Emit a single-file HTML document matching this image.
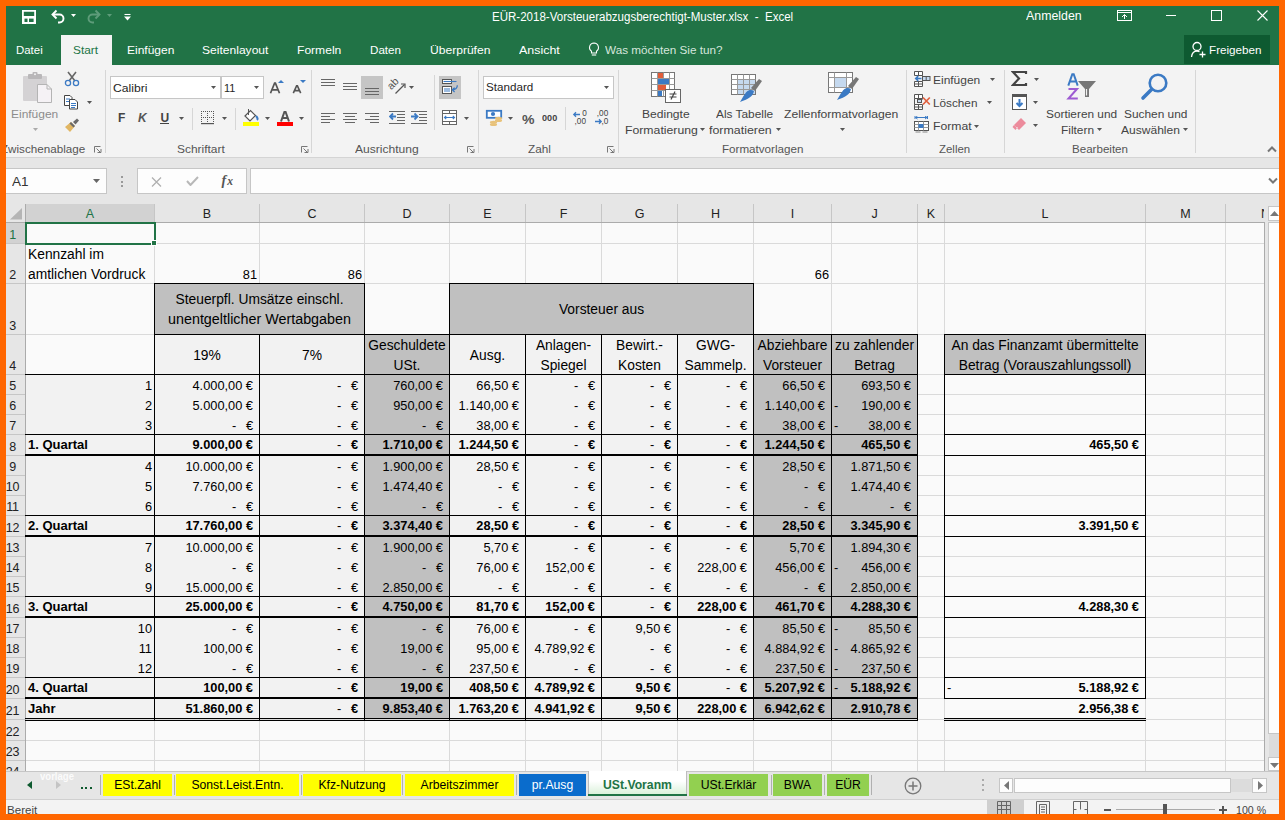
<!DOCTYPE html>
<html><head><meta charset="utf-8"><style>
*{margin:0;padding:0;box-sizing:border-box}
html,body{width:1285px;height:820px;overflow:hidden;background:#ff6600;font-family:"Liberation Sans", sans-serif}
.t{position:absolute;white-space:nowrap;line-height:1}
</style></head><body>

<div style="position:absolute;left:6px;top:6px;width:1273px;height:808px;background:#217346;"></div>
<div style="position:absolute;left:6px;top:65px;width:1273px;height:93px;background:#f3f3f3;border-bottom:1px solid #d4d4d4;"></div>
<div style="position:absolute;left:6px;top:158px;width:1273px;height:46px;background:#e6e6e6;"></div>
<div style="position:absolute;left:6px;top:204px;width:1259px;height:567px;background:#fafafa;"></div>
<div style="position:absolute;left:6px;top:204px;width:1259px;height:19px;background:#e6e6e6;"></div>
<div style="position:absolute;left:6px;top:204px;width:19px;height:567px;background:#e6e6e6;"></div>
<div style="position:absolute;left:26px;top:204px;width:128px;height:18px;background:#d2d2d2;"></div>
<div style="position:absolute;left:6px;top:223px;width:19px;height:20px;background:#d2d2d2;"></div>
<div style="position:absolute;left:6px;top:222px;width:1259px;height:1px;background:#ababab;"></div>
<div style="position:absolute;left:25px;top:204px;width:1px;height:567px;background:#ababab;"></div>
<div style="position:absolute;left:154px;top:223px;width:1px;height:548px;background:#dadada;"></div>
<div style="position:absolute;left:154px;top:204px;width:1px;height:18px;background:#c6c6c6;"></div>
<div style="position:absolute;left:259px;top:223px;width:1px;height:548px;background:#dadada;"></div>
<div style="position:absolute;left:259px;top:204px;width:1px;height:18px;background:#c6c6c6;"></div>
<div style="position:absolute;left:364px;top:223px;width:1px;height:548px;background:#dadada;"></div>
<div style="position:absolute;left:364px;top:204px;width:1px;height:18px;background:#c6c6c6;"></div>
<div style="position:absolute;left:449px;top:223px;width:1px;height:548px;background:#dadada;"></div>
<div style="position:absolute;left:449px;top:204px;width:1px;height:18px;background:#c6c6c6;"></div>
<div style="position:absolute;left:525px;top:223px;width:1px;height:548px;background:#dadada;"></div>
<div style="position:absolute;left:525px;top:204px;width:1px;height:18px;background:#c6c6c6;"></div>
<div style="position:absolute;left:601px;top:223px;width:1px;height:548px;background:#dadada;"></div>
<div style="position:absolute;left:601px;top:204px;width:1px;height:18px;background:#c6c6c6;"></div>
<div style="position:absolute;left:677px;top:223px;width:1px;height:548px;background:#dadada;"></div>
<div style="position:absolute;left:677px;top:204px;width:1px;height:18px;background:#c6c6c6;"></div>
<div style="position:absolute;left:753px;top:223px;width:1px;height:548px;background:#dadada;"></div>
<div style="position:absolute;left:753px;top:204px;width:1px;height:18px;background:#c6c6c6;"></div>
<div style="position:absolute;left:831px;top:223px;width:1px;height:548px;background:#dadada;"></div>
<div style="position:absolute;left:831px;top:204px;width:1px;height:18px;background:#c6c6c6;"></div>
<div style="position:absolute;left:917px;top:223px;width:1px;height:548px;background:#dadada;"></div>
<div style="position:absolute;left:917px;top:204px;width:1px;height:18px;background:#c6c6c6;"></div>
<div style="position:absolute;left:944px;top:223px;width:1px;height:548px;background:#dadada;"></div>
<div style="position:absolute;left:944px;top:204px;width:1px;height:18px;background:#c6c6c6;"></div>
<div style="position:absolute;left:1145px;top:223px;width:1px;height:548px;background:#dadada;"></div>
<div style="position:absolute;left:1145px;top:204px;width:1px;height:18px;background:#c6c6c6;"></div>
<div style="position:absolute;left:1225px;top:223px;width:1px;height:548px;background:#dadada;"></div>
<div style="position:absolute;left:1225px;top:204px;width:1px;height:18px;background:#c6c6c6;"></div>
<div style="position:absolute;left:26px;top:243px;width:1239px;height:1px;background:#dadada;"></div>
<div style="position:absolute;left:6px;top:243px;width:19px;height:1px;background:#c6c6c6;"></div>
<div style="position:absolute;left:26px;top:283px;width:1239px;height:1px;background:#dadada;"></div>
<div style="position:absolute;left:6px;top:283px;width:19px;height:1px;background:#c6c6c6;"></div>
<div style="position:absolute;left:26px;top:334px;width:1239px;height:1px;background:#dadada;"></div>
<div style="position:absolute;left:6px;top:334px;width:19px;height:1px;background:#c6c6c6;"></div>
<div style="position:absolute;left:26px;top:374px;width:1239px;height:1px;background:#dadada;"></div>
<div style="position:absolute;left:6px;top:374px;width:19px;height:1px;background:#c6c6c6;"></div>
<div style="position:absolute;left:26px;top:394px;width:1239px;height:1px;background:#dadada;"></div>
<div style="position:absolute;left:6px;top:394px;width:19px;height:1px;background:#c6c6c6;"></div>
<div style="position:absolute;left:26px;top:414px;width:1239px;height:1px;background:#dadada;"></div>
<div style="position:absolute;left:6px;top:414px;width:19px;height:1px;background:#c6c6c6;"></div>
<div style="position:absolute;left:26px;top:434px;width:1239px;height:1px;background:#dadada;"></div>
<div style="position:absolute;left:6px;top:434px;width:19px;height:1px;background:#c6c6c6;"></div>
<div style="position:absolute;left:26px;top:455px;width:1239px;height:1px;background:#dadada;"></div>
<div style="position:absolute;left:6px;top:455px;width:19px;height:1px;background:#c6c6c6;"></div>
<div style="position:absolute;left:26px;top:475px;width:1239px;height:1px;background:#dadada;"></div>
<div style="position:absolute;left:6px;top:475px;width:19px;height:1px;background:#c6c6c6;"></div>
<div style="position:absolute;left:26px;top:495px;width:1239px;height:1px;background:#dadada;"></div>
<div style="position:absolute;left:6px;top:495px;width:19px;height:1px;background:#c6c6c6;"></div>
<div style="position:absolute;left:26px;top:515px;width:1239px;height:1px;background:#dadada;"></div>
<div style="position:absolute;left:6px;top:515px;width:19px;height:1px;background:#c6c6c6;"></div>
<div style="position:absolute;left:26px;top:536px;width:1239px;height:1px;background:#dadada;"></div>
<div style="position:absolute;left:6px;top:536px;width:19px;height:1px;background:#c6c6c6;"></div>
<div style="position:absolute;left:26px;top:556px;width:1239px;height:1px;background:#dadada;"></div>
<div style="position:absolute;left:6px;top:556px;width:19px;height:1px;background:#c6c6c6;"></div>
<div style="position:absolute;left:26px;top:576px;width:1239px;height:1px;background:#dadada;"></div>
<div style="position:absolute;left:6px;top:576px;width:19px;height:1px;background:#c6c6c6;"></div>
<div style="position:absolute;left:26px;top:596px;width:1239px;height:1px;background:#dadada;"></div>
<div style="position:absolute;left:6px;top:596px;width:19px;height:1px;background:#c6c6c6;"></div>
<div style="position:absolute;left:26px;top:617px;width:1239px;height:1px;background:#dadada;"></div>
<div style="position:absolute;left:6px;top:617px;width:19px;height:1px;background:#c6c6c6;"></div>
<div style="position:absolute;left:26px;top:637px;width:1239px;height:1px;background:#dadada;"></div>
<div style="position:absolute;left:6px;top:637px;width:19px;height:1px;background:#c6c6c6;"></div>
<div style="position:absolute;left:26px;top:657px;width:1239px;height:1px;background:#dadada;"></div>
<div style="position:absolute;left:6px;top:657px;width:19px;height:1px;background:#c6c6c6;"></div>
<div style="position:absolute;left:26px;top:677px;width:1239px;height:1px;background:#dadada;"></div>
<div style="position:absolute;left:6px;top:677px;width:19px;height:1px;background:#c6c6c6;"></div>
<div style="position:absolute;left:26px;top:698px;width:1239px;height:1px;background:#dadada;"></div>
<div style="position:absolute;left:6px;top:698px;width:19px;height:1px;background:#c6c6c6;"></div>
<div style="position:absolute;left:26px;top:719px;width:1239px;height:1px;background:#dadada;"></div>
<div style="position:absolute;left:6px;top:719px;width:19px;height:1px;background:#c6c6c6;"></div>
<div style="position:absolute;left:26px;top:740px;width:1239px;height:1px;background:#dadada;"></div>
<div style="position:absolute;left:6px;top:740px;width:19px;height:1px;background:#c6c6c6;"></div>
<div style="position:absolute;left:26px;top:760px;width:1239px;height:1px;background:#dadada;"></div>
<div style="position:absolute;left:6px;top:760px;width:19px;height:1px;background:#c6c6c6;"></div>
<div class="t" style="left:26px;top:208px;font-size:12.5px;color:#217346;width:128px;text-align:center;">A</div>
<div class="t" style="left:155px;top:208px;font-size:12.5px;color:#222;width:104px;text-align:center;">B</div>
<div class="t" style="left:260px;top:208px;font-size:12.5px;color:#222;width:104px;text-align:center;">C</div>
<div class="t" style="left:365px;top:208px;font-size:12.5px;color:#222;width:84px;text-align:center;">D</div>
<div class="t" style="left:450px;top:208px;font-size:12.5px;color:#222;width:75px;text-align:center;">E</div>
<div class="t" style="left:526px;top:208px;font-size:12.5px;color:#222;width:75px;text-align:center;">F</div>
<div class="t" style="left:602px;top:208px;font-size:12.5px;color:#222;width:75px;text-align:center;">G</div>
<div class="t" style="left:678px;top:208px;font-size:12.5px;color:#222;width:75px;text-align:center;">H</div>
<div class="t" style="left:754px;top:208px;font-size:12.5px;color:#222;width:77px;text-align:center;">I</div>
<div class="t" style="left:832px;top:208px;font-size:12.5px;color:#222;width:85px;text-align:center;">J</div>
<div class="t" style="left:918px;top:208px;font-size:12.5px;color:#222;width:26px;text-align:center;">K</div>
<div class="t" style="left:945px;top:208px;font-size:12.5px;color:#222;width:200px;text-align:center;">L</div>
<div class="t" style="left:1146px;top:208px;font-size:12.5px;color:#222;width:79px;text-align:center;">M</div>
<div style="position:absolute;left:1226px;top:204px;width:38px;height:18px;overflow:hidden">
<div class="t" style="left:35px;top:4px;font-size:12.5px;color:#222;">N</div>
</div>
<div class="t" style="left:3px;top:229px;font-size:12.5px;color:#217346;width:19px;text-align:center;letter-spacing:-0.3px;">1</div>
<div class="t" style="left:3px;top:269px;font-size:12.5px;color:#222;width:19px;text-align:center;letter-spacing:-0.3px;">2</div>
<div class="t" style="left:3px;top:320px;font-size:12.5px;color:#222;width:19px;text-align:center;letter-spacing:-0.3px;">3</div>
<div class="t" style="left:3px;top:360px;font-size:12.5px;color:#222;width:19px;text-align:center;letter-spacing:-0.3px;">4</div>
<div class="t" style="left:3px;top:380px;font-size:12.5px;color:#222;width:19px;text-align:center;letter-spacing:-0.3px;">5</div>
<div class="t" style="left:3px;top:400px;font-size:12.5px;color:#222;width:19px;text-align:center;letter-spacing:-0.3px;">6</div>
<div class="t" style="left:3px;top:420px;font-size:12.5px;color:#222;width:19px;text-align:center;letter-spacing:-0.3px;">7</div>
<div class="t" style="left:3px;top:441px;font-size:12.5px;color:#222;width:19px;text-align:center;letter-spacing:-0.3px;">8</div>
<div class="t" style="left:3px;top:461px;font-size:12.5px;color:#222;width:19px;text-align:center;letter-spacing:-0.3px;">9</div>
<div class="t" style="left:3px;top:481px;font-size:12.5px;color:#222;width:19px;text-align:center;letter-spacing:-0.3px;">10</div>
<div class="t" style="left:3px;top:501px;font-size:12.5px;color:#222;width:19px;text-align:center;letter-spacing:-0.3px;">11</div>
<div class="t" style="left:3px;top:522px;font-size:12.5px;color:#222;width:19px;text-align:center;letter-spacing:-0.3px;">12</div>
<div class="t" style="left:3px;top:542px;font-size:12.5px;color:#222;width:19px;text-align:center;letter-spacing:-0.3px;">13</div>
<div class="t" style="left:3px;top:562px;font-size:12.5px;color:#222;width:19px;text-align:center;letter-spacing:-0.3px;">14</div>
<div class="t" style="left:3px;top:582px;font-size:12.5px;color:#222;width:19px;text-align:center;letter-spacing:-0.3px;">15</div>
<div class="t" style="left:3px;top:603px;font-size:12.5px;color:#222;width:19px;text-align:center;letter-spacing:-0.3px;">16</div>
<div class="t" style="left:3px;top:623px;font-size:12.5px;color:#222;width:19px;text-align:center;letter-spacing:-0.3px;">17</div>
<div class="t" style="left:3px;top:643px;font-size:12.5px;color:#222;width:19px;text-align:center;letter-spacing:-0.3px;">18</div>
<div class="t" style="left:3px;top:663px;font-size:12.5px;color:#222;width:19px;text-align:center;letter-spacing:-0.3px;">19</div>
<div class="t" style="left:3px;top:684px;font-size:12.5px;color:#222;width:19px;text-align:center;letter-spacing:-0.3px;">20</div>
<div class="t" style="left:3px;top:705px;font-size:12.5px;color:#222;width:19px;text-align:center;letter-spacing:-0.3px;">21</div>
<div class="t" style="left:3px;top:726px;font-size:12.5px;color:#222;width:19px;text-align:center;letter-spacing:-0.3px;">22</div>
<div class="t" style="left:3px;top:746px;font-size:12.5px;color:#222;width:19px;text-align:center;letter-spacing:-0.3px;">23</div>
<div class="t" style="left:3px;top:766px;font-size:12.5px;color:#222;width:19px;text-align:center;letter-spacing:-0.3px;">24</div>
<div style="position:absolute;left:155px;top:284px;width:209px;height:50px;background:#c0c0c0;"></div>
<div style="position:absolute;left:450px;top:284px;width:303px;height:50px;background:#c0c0c0;"></div>
<div style="position:absolute;left:155px;top:335px;width:209px;height:39px;background:#f2f2f2;"></div>
<div style="position:absolute;left:450px;top:335px;width:303px;height:39px;background:#f2f2f2;"></div>
<div style="position:absolute;left:365px;top:335px;width:84px;height:384px;background:#c0c0c0;"></div>
<div style="position:absolute;left:754px;top:335px;width:163px;height:384px;background:#c0c0c0;"></div>
<div style="position:absolute;left:945px;top:335px;width:200px;height:39px;background:#c0c0c0;"></div>
<div style="position:absolute;left:26px;top:375px;width:338px;height:344px;background:#f2f2f2;"></div>
<div style="position:absolute;left:450px;top:375px;width:303px;height:344px;background:#f2f2f2;"></div>
<div style="position:absolute;left:154px;top:283px;width:1px;height:438px;background:#000;"></div>
<div style="position:absolute;left:364px;top:283px;width:1px;height:438px;background:#000;"></div>
<div style="position:absolute;left:449px;top:283px;width:1px;height:438px;background:#000;"></div>
<div style="position:absolute;left:753px;top:283px;width:1px;height:438px;background:#000;"></div>
<div style="position:absolute;left:259px;top:334px;width:1px;height:387px;background:#000;"></div>
<div style="position:absolute;left:525px;top:334px;width:1px;height:387px;background:#000;"></div>
<div style="position:absolute;left:601px;top:334px;width:1px;height:387px;background:#000;"></div>
<div style="position:absolute;left:677px;top:334px;width:1px;height:387px;background:#000;"></div>
<div style="position:absolute;left:831px;top:334px;width:1px;height:387px;background:#000;"></div>
<div style="position:absolute;left:917px;top:334px;width:1px;height:387px;background:#000;"></div>
<div style="position:absolute;left:944px;top:334px;width:1px;height:365px;background:#000;"></div>
<div style="position:absolute;left:1145px;top:334px;width:1px;height:365px;background:#000;"></div>
<div style="position:absolute;left:154px;top:283px;width:211px;height:1px;background:#000;"></div>
<div style="position:absolute;left:449px;top:283px;width:305px;height:1px;background:#000;"></div>
<div style="position:absolute;left:154px;top:334px;width:764px;height:1px;background:#000;"></div>
<div style="position:absolute;left:944px;top:334px;width:202px;height:1px;background:#000;"></div>
<div style="position:absolute;left:25px;top:374px;width:893px;height:1px;background:#000;"></div>
<div style="position:absolute;left:944px;top:374px;width:202px;height:1px;background:#000;"></div>
<div style="position:absolute;left:25px;top:434px;width:893px;height:1px;background:#000;"></div>
<div style="position:absolute;left:944px;top:434px;width:202px;height:1px;background:#000;"></div>
<div style="position:absolute;left:25px;top:515px;width:893px;height:1px;background:#000;"></div>
<div style="position:absolute;left:944px;top:515px;width:202px;height:1px;background:#000;"></div>
<div style="position:absolute;left:25px;top:596px;width:893px;height:1px;background:#000;"></div>
<div style="position:absolute;left:944px;top:596px;width:202px;height:1px;background:#000;"></div>
<div style="position:absolute;left:25px;top:677px;width:893px;height:1px;background:#000;"></div>
<div style="position:absolute;left:944px;top:677px;width:202px;height:1px;background:#000;"></div>
<div style="position:absolute;left:25px;top:454px;width:893px;height:2px;background:#000;"></div>
<div style="position:absolute;left:944px;top:455px;width:202px;height:1px;background:#000;"></div>
<div style="position:absolute;left:25px;top:535px;width:893px;height:2px;background:#000;"></div>
<div style="position:absolute;left:944px;top:536px;width:202px;height:1px;background:#000;"></div>
<div style="position:absolute;left:25px;top:616px;width:893px;height:2px;background:#000;"></div>
<div style="position:absolute;left:944px;top:617px;width:202px;height:1px;background:#000;"></div>
<div style="position:absolute;left:25px;top:697px;width:893px;height:2px;background:#000;"></div>
<div style="position:absolute;left:944px;top:698px;width:202px;height:1px;background:#000;"></div>
<div style="position:absolute;left:25px;top:718px;width:893px;height:1px;background:#000;"></div>
<div style="position:absolute;left:25px;top:720px;width:893px;height:1px;background:#000;"></div>
<div style="position:absolute;left:944px;top:718px;width:202px;height:1px;background:#000;"></div>
<div style="position:absolute;left:944px;top:720px;width:202px;height:1px;background:#000;"></div>
<div class="t" style="left:28px;top:248px;font-size:13.8px;color:#000;">Kennzahl im</div>
<div class="t" style="left:28px;top:268px;font-size:13.8px;color:#000;">amtlichen Vordruck</div>
<div class="t" style="left:155px;top:269px;font-size:12.8px;color:#000;width:102px;text-align:right;">81</div>
<div class="t" style="left:260px;top:269px;font-size:12.8px;color:#000;width:102px;text-align:right;">86</div>
<div class="t" style="left:754px;top:269px;font-size:12.8px;color:#000;width:75px;text-align:right;">66</div>
<div class="t" style="left:155px;top:293px;font-size:13.8px;color:#000;width:209px;text-align:center;">Steuerpfl. Umsätze einschl.</div>
<div class="t" style="left:168.2px;top:313px;font-size:13.8px;color:#000;transform:scaleX(1.0386);transform-origin:0 0;">unentgeltlicher Wertabgaben</div>
<div class="t" style="left:450px;top:303px;font-size:13.8px;color:#000;width:303px;text-align:center;">Vorsteuer aus</div>
<div class="t" style="left:155px;top:349px;font-size:13.8px;color:#000;width:104px;text-align:center;">19%</div>
<div class="t" style="left:260px;top:349px;font-size:13.8px;color:#000;width:104px;text-align:center;">7%</div>
<div class="t" style="left:365px;top:339px;font-size:13.8px;color:#000;width:84px;text-align:center;">Geschuldete</div>
<div class="t" style="left:365px;top:359px;font-size:13.8px;color:#000;width:84px;text-align:center;">USt.</div>
<div class="t" style="left:450px;top:349px;font-size:13.8px;color:#000;width:75px;text-align:center;">Ausg.</div>
<div class="t" style="left:526px;top:339px;font-size:13.8px;color:#000;width:75px;text-align:center;">Anlagen-</div>
<div class="t" style="left:526px;top:359px;font-size:13.8px;color:#000;width:75px;text-align:center;">Spiegel</div>
<div class="t" style="left:602px;top:339px;font-size:13.8px;color:#000;width:75px;text-align:center;">Bewirt.-</div>
<div class="t" style="left:602px;top:359px;font-size:13.8px;color:#000;width:75px;text-align:center;">Kosten</div>
<div class="t" style="left:678px;top:339px;font-size:13.8px;color:#000;width:75px;text-align:center;">GWG-</div>
<div class="t" style="left:678px;top:359px;font-size:13.8px;color:#000;width:75px;text-align:center;">Sammelp.</div>
<div class="t" style="left:754px;top:339px;font-size:13.8px;color:#000;width:77px;text-align:center;">Abziehbare</div>
<div class="t" style="left:754px;top:359px;font-size:13.8px;color:#000;width:77px;text-align:center;">Vorsteuer</div>
<div class="t" style="left:832px;top:339px;font-size:13.8px;color:#000;width:85px;text-align:center;">zu zahlender</div>
<div class="t" style="left:832px;top:359px;font-size:13.8px;color:#000;width:85px;text-align:center;">Betrag</div>
<div class="t" style="left:945px;top:339px;font-size:13.8px;color:#000;width:200px;text-align:center;">An das Finanzamt übermittelte</div>
<div class="t" style="left:945px;top:359px;font-size:13.8px;color:#000;width:200px;text-align:center;">Betrag (Vorauszahlungssoll)</div>
<div class="t" style="left:26px;top:380px;font-size:12.8px;color:#000;width:126px;text-align:right;">1</div>
<div class="t" style="left:155px;top:380px;font-size:12.8px;color:#000;width:98px;text-align:right;">4.000,00 €</div>
<div class="t" style="left:337px;top:380px;font-size:12.8px;color:#000;">-</div>
<div class="t" style="left:260px;top:380px;font-size:12.8px;color:#000;width:98px;text-align:right;">€</div>
<div class="t" style="left:365px;top:380px;font-size:12.8px;color:#000;width:78px;text-align:right;">760,00 €</div>
<div class="t" style="left:450px;top:380px;font-size:12.8px;color:#000;width:69px;text-align:right;">66,50 €</div>
<div class="t" style="left:574px;top:380px;font-size:12.8px;color:#000;">-</div>
<div class="t" style="left:526px;top:380px;font-size:12.8px;color:#000;width:69px;text-align:right;">€</div>
<div class="t" style="left:650px;top:380px;font-size:12.8px;color:#000;">-</div>
<div class="t" style="left:602px;top:380px;font-size:12.8px;color:#000;width:69px;text-align:right;">€</div>
<div class="t" style="left:726px;top:380px;font-size:12.8px;color:#000;">-</div>
<div class="t" style="left:678px;top:380px;font-size:12.8px;color:#000;width:69px;text-align:right;">€</div>
<div class="t" style="left:754px;top:380px;font-size:12.8px;color:#000;width:71px;text-align:right;">66,50 €</div>
<div class="t" style="left:832px;top:380px;font-size:12.8px;color:#000;width:79px;text-align:right;">693,50 €</div>
<div class="t" style="left:26px;top:400px;font-size:12.8px;color:#000;width:126px;text-align:right;">2</div>
<div class="t" style="left:155px;top:400px;font-size:12.8px;color:#000;width:98px;text-align:right;">5.000,00 €</div>
<div class="t" style="left:337px;top:400px;font-size:12.8px;color:#000;">-</div>
<div class="t" style="left:260px;top:400px;font-size:12.8px;color:#000;width:98px;text-align:right;">€</div>
<div class="t" style="left:365px;top:400px;font-size:12.8px;color:#000;width:78px;text-align:right;">950,00 €</div>
<div class="t" style="left:450px;top:400px;font-size:12.8px;color:#000;width:69px;text-align:right;">1.140,00 €</div>
<div class="t" style="left:574px;top:400px;font-size:12.8px;color:#000;">-</div>
<div class="t" style="left:526px;top:400px;font-size:12.8px;color:#000;width:69px;text-align:right;">€</div>
<div class="t" style="left:650px;top:400px;font-size:12.8px;color:#000;">-</div>
<div class="t" style="left:602px;top:400px;font-size:12.8px;color:#000;width:69px;text-align:right;">€</div>
<div class="t" style="left:726px;top:400px;font-size:12.8px;color:#000;">-</div>
<div class="t" style="left:678px;top:400px;font-size:12.8px;color:#000;width:69px;text-align:right;">€</div>
<div class="t" style="left:754px;top:400px;font-size:12.8px;color:#000;width:71px;text-align:right;">1.140,00 €</div>
<div class="t" style="left:834px;top:400px;font-size:12.8px;color:#000;">-</div>
<div class="t" style="left:832px;top:400px;font-size:12.8px;color:#000;width:79px;text-align:right;">190,00 €</div>
<div class="t" style="left:26px;top:420px;font-size:12.8px;color:#000;width:126px;text-align:right;">3</div>
<div class="t" style="left:232px;top:420px;font-size:12.8px;color:#000;">-</div>
<div class="t" style="left:155px;top:420px;font-size:12.8px;color:#000;width:98px;text-align:right;">€</div>
<div class="t" style="left:337px;top:420px;font-size:12.8px;color:#000;">-</div>
<div class="t" style="left:260px;top:420px;font-size:12.8px;color:#000;width:98px;text-align:right;">€</div>
<div class="t" style="left:422px;top:420px;font-size:12.8px;color:#000;">-</div>
<div class="t" style="left:365px;top:420px;font-size:12.8px;color:#000;width:78px;text-align:right;">€</div>
<div class="t" style="left:450px;top:420px;font-size:12.8px;color:#000;width:69px;text-align:right;">38,00 €</div>
<div class="t" style="left:574px;top:420px;font-size:12.8px;color:#000;">-</div>
<div class="t" style="left:526px;top:420px;font-size:12.8px;color:#000;width:69px;text-align:right;">€</div>
<div class="t" style="left:650px;top:420px;font-size:12.8px;color:#000;">-</div>
<div class="t" style="left:602px;top:420px;font-size:12.8px;color:#000;width:69px;text-align:right;">€</div>
<div class="t" style="left:726px;top:420px;font-size:12.8px;color:#000;">-</div>
<div class="t" style="left:678px;top:420px;font-size:12.8px;color:#000;width:69px;text-align:right;">€</div>
<div class="t" style="left:754px;top:420px;font-size:12.8px;color:#000;width:71px;text-align:right;">38,00 €</div>
<div class="t" style="left:834px;top:420px;font-size:12.8px;color:#000;">-</div>
<div class="t" style="left:832px;top:420px;font-size:12.8px;color:#000;width:79px;text-align:right;">38,00 €</div>
<div class="t" style="left:28px;top:438px;font-size:13px;color:#000;font-weight:bold;">1. Quartal</div>
<div class="t" style="left:155px;top:439px;font-size:12.8px;color:#000;font-weight:bold;width:98px;text-align:right;">9.000,00 €</div>
<div class="t" style="left:337px;top:439px;font-size:12.8px;color:#000;">-</div>
<div class="t" style="left:260px;top:439px;font-size:12.8px;color:#000;font-weight:bold;width:98px;text-align:right;">€</div>
<div class="t" style="left:365px;top:439px;font-size:12.8px;color:#000;font-weight:bold;width:78px;text-align:right;">1.710,00 €</div>
<div class="t" style="left:450px;top:439px;font-size:12.8px;color:#000;font-weight:bold;width:69px;text-align:right;">1.244,50 €</div>
<div class="t" style="left:574px;top:439px;font-size:12.8px;color:#000;">-</div>
<div class="t" style="left:526px;top:439px;font-size:12.8px;color:#000;font-weight:bold;width:69px;text-align:right;">€</div>
<div class="t" style="left:650px;top:439px;font-size:12.8px;color:#000;">-</div>
<div class="t" style="left:602px;top:439px;font-size:12.8px;color:#000;font-weight:bold;width:69px;text-align:right;">€</div>
<div class="t" style="left:726px;top:439px;font-size:12.8px;color:#000;">-</div>
<div class="t" style="left:678px;top:439px;font-size:12.8px;color:#000;font-weight:bold;width:69px;text-align:right;">€</div>
<div class="t" style="left:754px;top:439px;font-size:12.8px;color:#000;font-weight:bold;width:71px;text-align:right;">1.244,50 €</div>
<div class="t" style="left:832px;top:439px;font-size:12.8px;color:#000;font-weight:bold;width:79px;text-align:right;">465,50 €</div>
<div class="t" style="left:26px;top:461px;font-size:12.8px;color:#000;width:126px;text-align:right;">4</div>
<div class="t" style="left:155px;top:461px;font-size:12.8px;color:#000;width:98px;text-align:right;">10.000,00 €</div>
<div class="t" style="left:337px;top:461px;font-size:12.8px;color:#000;">-</div>
<div class="t" style="left:260px;top:461px;font-size:12.8px;color:#000;width:98px;text-align:right;">€</div>
<div class="t" style="left:365px;top:461px;font-size:12.8px;color:#000;width:78px;text-align:right;">1.900,00 €</div>
<div class="t" style="left:450px;top:461px;font-size:12.8px;color:#000;width:69px;text-align:right;">28,50 €</div>
<div class="t" style="left:574px;top:461px;font-size:12.8px;color:#000;">-</div>
<div class="t" style="left:526px;top:461px;font-size:12.8px;color:#000;width:69px;text-align:right;">€</div>
<div class="t" style="left:650px;top:461px;font-size:12.8px;color:#000;">-</div>
<div class="t" style="left:602px;top:461px;font-size:12.8px;color:#000;width:69px;text-align:right;">€</div>
<div class="t" style="left:726px;top:461px;font-size:12.8px;color:#000;">-</div>
<div class="t" style="left:678px;top:461px;font-size:12.8px;color:#000;width:69px;text-align:right;">€</div>
<div class="t" style="left:754px;top:461px;font-size:12.8px;color:#000;width:71px;text-align:right;">28,50 €</div>
<div class="t" style="left:832px;top:461px;font-size:12.8px;color:#000;width:79px;text-align:right;">1.871,50 €</div>
<div class="t" style="left:26px;top:481px;font-size:12.8px;color:#000;width:126px;text-align:right;">5</div>
<div class="t" style="left:155px;top:481px;font-size:12.8px;color:#000;width:98px;text-align:right;">7.760,00 €</div>
<div class="t" style="left:337px;top:481px;font-size:12.8px;color:#000;">-</div>
<div class="t" style="left:260px;top:481px;font-size:12.8px;color:#000;width:98px;text-align:right;">€</div>
<div class="t" style="left:365px;top:481px;font-size:12.8px;color:#000;width:78px;text-align:right;">1.474,40 €</div>
<div class="t" style="left:498px;top:481px;font-size:12.8px;color:#000;">-</div>
<div class="t" style="left:450px;top:481px;font-size:12.8px;color:#000;width:69px;text-align:right;">€</div>
<div class="t" style="left:574px;top:481px;font-size:12.8px;color:#000;">-</div>
<div class="t" style="left:526px;top:481px;font-size:12.8px;color:#000;width:69px;text-align:right;">€</div>
<div class="t" style="left:650px;top:481px;font-size:12.8px;color:#000;">-</div>
<div class="t" style="left:602px;top:481px;font-size:12.8px;color:#000;width:69px;text-align:right;">€</div>
<div class="t" style="left:726px;top:481px;font-size:12.8px;color:#000;">-</div>
<div class="t" style="left:678px;top:481px;font-size:12.8px;color:#000;width:69px;text-align:right;">€</div>
<div class="t" style="left:804px;top:481px;font-size:12.8px;color:#000;">-</div>
<div class="t" style="left:754px;top:481px;font-size:12.8px;color:#000;width:71px;text-align:right;">€</div>
<div class="t" style="left:832px;top:481px;font-size:12.8px;color:#000;width:79px;text-align:right;">1.474,40 €</div>
<div class="t" style="left:26px;top:501px;font-size:12.8px;color:#000;width:126px;text-align:right;">6</div>
<div class="t" style="left:232px;top:501px;font-size:12.8px;color:#000;">-</div>
<div class="t" style="left:155px;top:501px;font-size:12.8px;color:#000;width:98px;text-align:right;">€</div>
<div class="t" style="left:337px;top:501px;font-size:12.8px;color:#000;">-</div>
<div class="t" style="left:260px;top:501px;font-size:12.8px;color:#000;width:98px;text-align:right;">€</div>
<div class="t" style="left:422px;top:501px;font-size:12.8px;color:#000;">-</div>
<div class="t" style="left:365px;top:501px;font-size:12.8px;color:#000;width:78px;text-align:right;">€</div>
<div class="t" style="left:498px;top:501px;font-size:12.8px;color:#000;">-</div>
<div class="t" style="left:450px;top:501px;font-size:12.8px;color:#000;width:69px;text-align:right;">€</div>
<div class="t" style="left:574px;top:501px;font-size:12.8px;color:#000;">-</div>
<div class="t" style="left:526px;top:501px;font-size:12.8px;color:#000;width:69px;text-align:right;">€</div>
<div class="t" style="left:650px;top:501px;font-size:12.8px;color:#000;">-</div>
<div class="t" style="left:602px;top:501px;font-size:12.8px;color:#000;width:69px;text-align:right;">€</div>
<div class="t" style="left:726px;top:501px;font-size:12.8px;color:#000;">-</div>
<div class="t" style="left:678px;top:501px;font-size:12.8px;color:#000;width:69px;text-align:right;">€</div>
<div class="t" style="left:804px;top:501px;font-size:12.8px;color:#000;">-</div>
<div class="t" style="left:754px;top:501px;font-size:12.8px;color:#000;width:71px;text-align:right;">€</div>
<div class="t" style="left:890px;top:501px;font-size:12.8px;color:#000;">-</div>
<div class="t" style="left:832px;top:501px;font-size:12.8px;color:#000;width:79px;text-align:right;">€</div>
<div class="t" style="left:28px;top:519px;font-size:13px;color:#000;font-weight:bold;">2. Quartal</div>
<div class="t" style="left:155px;top:520px;font-size:12.8px;color:#000;font-weight:bold;width:98px;text-align:right;">17.760,00 €</div>
<div class="t" style="left:337px;top:520px;font-size:12.8px;color:#000;">-</div>
<div class="t" style="left:260px;top:520px;font-size:12.8px;color:#000;font-weight:bold;width:98px;text-align:right;">€</div>
<div class="t" style="left:365px;top:520px;font-size:12.8px;color:#000;font-weight:bold;width:78px;text-align:right;">3.374,40 €</div>
<div class="t" style="left:450px;top:520px;font-size:12.8px;color:#000;font-weight:bold;width:69px;text-align:right;">28,50 €</div>
<div class="t" style="left:574px;top:520px;font-size:12.8px;color:#000;">-</div>
<div class="t" style="left:526px;top:520px;font-size:12.8px;color:#000;font-weight:bold;width:69px;text-align:right;">€</div>
<div class="t" style="left:650px;top:520px;font-size:12.8px;color:#000;">-</div>
<div class="t" style="left:602px;top:520px;font-size:12.8px;color:#000;font-weight:bold;width:69px;text-align:right;">€</div>
<div class="t" style="left:726px;top:520px;font-size:12.8px;color:#000;">-</div>
<div class="t" style="left:678px;top:520px;font-size:12.8px;color:#000;font-weight:bold;width:69px;text-align:right;">€</div>
<div class="t" style="left:754px;top:520px;font-size:12.8px;color:#000;font-weight:bold;width:71px;text-align:right;">28,50 €</div>
<div class="t" style="left:832px;top:520px;font-size:12.8px;color:#000;font-weight:bold;width:79px;text-align:right;">3.345,90 €</div>
<div class="t" style="left:26px;top:542px;font-size:12.8px;color:#000;width:126px;text-align:right;">7</div>
<div class="t" style="left:155px;top:542px;font-size:12.8px;color:#000;width:98px;text-align:right;">10.000,00 €</div>
<div class="t" style="left:337px;top:542px;font-size:12.8px;color:#000;">-</div>
<div class="t" style="left:260px;top:542px;font-size:12.8px;color:#000;width:98px;text-align:right;">€</div>
<div class="t" style="left:365px;top:542px;font-size:12.8px;color:#000;width:78px;text-align:right;">1.900,00 €</div>
<div class="t" style="left:450px;top:542px;font-size:12.8px;color:#000;width:69px;text-align:right;">5,70 €</div>
<div class="t" style="left:574px;top:542px;font-size:12.8px;color:#000;">-</div>
<div class="t" style="left:526px;top:542px;font-size:12.8px;color:#000;width:69px;text-align:right;">€</div>
<div class="t" style="left:650px;top:542px;font-size:12.8px;color:#000;">-</div>
<div class="t" style="left:602px;top:542px;font-size:12.8px;color:#000;width:69px;text-align:right;">€</div>
<div class="t" style="left:726px;top:542px;font-size:12.8px;color:#000;">-</div>
<div class="t" style="left:678px;top:542px;font-size:12.8px;color:#000;width:69px;text-align:right;">€</div>
<div class="t" style="left:754px;top:542px;font-size:12.8px;color:#000;width:71px;text-align:right;">5,70 €</div>
<div class="t" style="left:832px;top:542px;font-size:12.8px;color:#000;width:79px;text-align:right;">1.894,30 €</div>
<div class="t" style="left:26px;top:562px;font-size:12.8px;color:#000;width:126px;text-align:right;">8</div>
<div class="t" style="left:232px;top:562px;font-size:12.8px;color:#000;">-</div>
<div class="t" style="left:155px;top:562px;font-size:12.8px;color:#000;width:98px;text-align:right;">€</div>
<div class="t" style="left:337px;top:562px;font-size:12.8px;color:#000;">-</div>
<div class="t" style="left:260px;top:562px;font-size:12.8px;color:#000;width:98px;text-align:right;">€</div>
<div class="t" style="left:422px;top:562px;font-size:12.8px;color:#000;">-</div>
<div class="t" style="left:365px;top:562px;font-size:12.8px;color:#000;width:78px;text-align:right;">€</div>
<div class="t" style="left:450px;top:562px;font-size:12.8px;color:#000;width:69px;text-align:right;">76,00 €</div>
<div class="t" style="left:526px;top:562px;font-size:12.8px;color:#000;width:69px;text-align:right;">152,00 €</div>
<div class="t" style="left:650px;top:562px;font-size:12.8px;color:#000;">-</div>
<div class="t" style="left:602px;top:562px;font-size:12.8px;color:#000;width:69px;text-align:right;">€</div>
<div class="t" style="left:678px;top:562px;font-size:12.8px;color:#000;width:69px;text-align:right;">228,00 €</div>
<div class="t" style="left:754px;top:562px;font-size:12.8px;color:#000;width:71px;text-align:right;">456,00 €</div>
<div class="t" style="left:834px;top:562px;font-size:12.8px;color:#000;">-</div>
<div class="t" style="left:832px;top:562px;font-size:12.8px;color:#000;width:79px;text-align:right;">456,00 €</div>
<div class="t" style="left:26px;top:582px;font-size:12.8px;color:#000;width:126px;text-align:right;">9</div>
<div class="t" style="left:155px;top:582px;font-size:12.8px;color:#000;width:98px;text-align:right;">15.000,00 €</div>
<div class="t" style="left:337px;top:582px;font-size:12.8px;color:#000;">-</div>
<div class="t" style="left:260px;top:582px;font-size:12.8px;color:#000;width:98px;text-align:right;">€</div>
<div class="t" style="left:365px;top:582px;font-size:12.8px;color:#000;width:78px;text-align:right;">2.850,00 €</div>
<div class="t" style="left:498px;top:582px;font-size:12.8px;color:#000;">-</div>
<div class="t" style="left:450px;top:582px;font-size:12.8px;color:#000;width:69px;text-align:right;">€</div>
<div class="t" style="left:574px;top:582px;font-size:12.8px;color:#000;">-</div>
<div class="t" style="left:526px;top:582px;font-size:12.8px;color:#000;width:69px;text-align:right;">€</div>
<div class="t" style="left:650px;top:582px;font-size:12.8px;color:#000;">-</div>
<div class="t" style="left:602px;top:582px;font-size:12.8px;color:#000;width:69px;text-align:right;">€</div>
<div class="t" style="left:726px;top:582px;font-size:12.8px;color:#000;">-</div>
<div class="t" style="left:678px;top:582px;font-size:12.8px;color:#000;width:69px;text-align:right;">€</div>
<div class="t" style="left:804px;top:582px;font-size:12.8px;color:#000;">-</div>
<div class="t" style="left:754px;top:582px;font-size:12.8px;color:#000;width:71px;text-align:right;">€</div>
<div class="t" style="left:832px;top:582px;font-size:12.8px;color:#000;width:79px;text-align:right;">2.850,00 €</div>
<div class="t" style="left:28px;top:600px;font-size:13px;color:#000;font-weight:bold;">3. Quartal</div>
<div class="t" style="left:155px;top:601px;font-size:12.8px;color:#000;font-weight:bold;width:98px;text-align:right;">25.000,00 €</div>
<div class="t" style="left:337px;top:601px;font-size:12.8px;color:#000;">-</div>
<div class="t" style="left:260px;top:601px;font-size:12.8px;color:#000;font-weight:bold;width:98px;text-align:right;">€</div>
<div class="t" style="left:365px;top:601px;font-size:12.8px;color:#000;font-weight:bold;width:78px;text-align:right;">4.750,00 €</div>
<div class="t" style="left:450px;top:601px;font-size:12.8px;color:#000;font-weight:bold;width:69px;text-align:right;">81,70 €</div>
<div class="t" style="left:526px;top:601px;font-size:12.8px;color:#000;font-weight:bold;width:69px;text-align:right;">152,00 €</div>
<div class="t" style="left:650px;top:601px;font-size:12.8px;color:#000;">-</div>
<div class="t" style="left:602px;top:601px;font-size:12.8px;color:#000;font-weight:bold;width:69px;text-align:right;">€</div>
<div class="t" style="left:678px;top:601px;font-size:12.8px;color:#000;font-weight:bold;width:69px;text-align:right;">228,00 €</div>
<div class="t" style="left:754px;top:601px;font-size:12.8px;color:#000;font-weight:bold;width:71px;text-align:right;">461,70 €</div>
<div class="t" style="left:832px;top:601px;font-size:12.8px;color:#000;font-weight:bold;width:79px;text-align:right;">4.288,30 €</div>
<div class="t" style="left:26px;top:623px;font-size:12.8px;color:#000;width:126px;text-align:right;">10</div>
<div class="t" style="left:232px;top:623px;font-size:12.8px;color:#000;">-</div>
<div class="t" style="left:155px;top:623px;font-size:12.8px;color:#000;width:98px;text-align:right;">€</div>
<div class="t" style="left:337px;top:623px;font-size:12.8px;color:#000;">-</div>
<div class="t" style="left:260px;top:623px;font-size:12.8px;color:#000;width:98px;text-align:right;">€</div>
<div class="t" style="left:422px;top:623px;font-size:12.8px;color:#000;">-</div>
<div class="t" style="left:365px;top:623px;font-size:12.8px;color:#000;width:78px;text-align:right;">€</div>
<div class="t" style="left:450px;top:623px;font-size:12.8px;color:#000;width:69px;text-align:right;">76,00 €</div>
<div class="t" style="left:574px;top:623px;font-size:12.8px;color:#000;">-</div>
<div class="t" style="left:526px;top:623px;font-size:12.8px;color:#000;width:69px;text-align:right;">€</div>
<div class="t" style="left:602px;top:623px;font-size:12.8px;color:#000;width:69px;text-align:right;">9,50 €</div>
<div class="t" style="left:726px;top:623px;font-size:12.8px;color:#000;">-</div>
<div class="t" style="left:678px;top:623px;font-size:12.8px;color:#000;width:69px;text-align:right;">€</div>
<div class="t" style="left:754px;top:623px;font-size:12.8px;color:#000;width:71px;text-align:right;">85,50 €</div>
<div class="t" style="left:834px;top:623px;font-size:12.8px;color:#000;">-</div>
<div class="t" style="left:832px;top:623px;font-size:12.8px;color:#000;width:79px;text-align:right;">85,50 €</div>
<div class="t" style="left:26px;top:643px;font-size:12.8px;color:#000;width:126px;text-align:right;">11</div>
<div class="t" style="left:155px;top:643px;font-size:12.8px;color:#000;width:98px;text-align:right;">100,00 €</div>
<div class="t" style="left:337px;top:643px;font-size:12.8px;color:#000;">-</div>
<div class="t" style="left:260px;top:643px;font-size:12.8px;color:#000;width:98px;text-align:right;">€</div>
<div class="t" style="left:365px;top:643px;font-size:12.8px;color:#000;width:78px;text-align:right;">19,00 €</div>
<div class="t" style="left:450px;top:643px;font-size:12.8px;color:#000;width:69px;text-align:right;">95,00 €</div>
<div class="t" style="left:526px;top:643px;font-size:12.8px;color:#000;width:69px;text-align:right;">4.789,92 €</div>
<div class="t" style="left:650px;top:643px;font-size:12.8px;color:#000;">-</div>
<div class="t" style="left:602px;top:643px;font-size:12.8px;color:#000;width:69px;text-align:right;">€</div>
<div class="t" style="left:726px;top:643px;font-size:12.8px;color:#000;">-</div>
<div class="t" style="left:678px;top:643px;font-size:12.8px;color:#000;width:69px;text-align:right;">€</div>
<div class="t" style="left:754px;top:643px;font-size:12.8px;color:#000;width:71px;text-align:right;">4.884,92 €</div>
<div class="t" style="left:834px;top:643px;font-size:12.8px;color:#000;">-</div>
<div class="t" style="left:832px;top:643px;font-size:12.8px;color:#000;width:79px;text-align:right;">4.865,92 €</div>
<div class="t" style="left:26px;top:663px;font-size:12.8px;color:#000;width:126px;text-align:right;">12</div>
<div class="t" style="left:232px;top:663px;font-size:12.8px;color:#000;">-</div>
<div class="t" style="left:155px;top:663px;font-size:12.8px;color:#000;width:98px;text-align:right;">€</div>
<div class="t" style="left:337px;top:663px;font-size:12.8px;color:#000;">-</div>
<div class="t" style="left:260px;top:663px;font-size:12.8px;color:#000;width:98px;text-align:right;">€</div>
<div class="t" style="left:422px;top:663px;font-size:12.8px;color:#000;">-</div>
<div class="t" style="left:365px;top:663px;font-size:12.8px;color:#000;width:78px;text-align:right;">€</div>
<div class="t" style="left:450px;top:663px;font-size:12.8px;color:#000;width:69px;text-align:right;">237,50 €</div>
<div class="t" style="left:574px;top:663px;font-size:12.8px;color:#000;">-</div>
<div class="t" style="left:526px;top:663px;font-size:12.8px;color:#000;width:69px;text-align:right;">€</div>
<div class="t" style="left:650px;top:663px;font-size:12.8px;color:#000;">-</div>
<div class="t" style="left:602px;top:663px;font-size:12.8px;color:#000;width:69px;text-align:right;">€</div>
<div class="t" style="left:726px;top:663px;font-size:12.8px;color:#000;">-</div>
<div class="t" style="left:678px;top:663px;font-size:12.8px;color:#000;width:69px;text-align:right;">€</div>
<div class="t" style="left:754px;top:663px;font-size:12.8px;color:#000;width:71px;text-align:right;">237,50 €</div>
<div class="t" style="left:834px;top:663px;font-size:12.8px;color:#000;">-</div>
<div class="t" style="left:832px;top:663px;font-size:12.8px;color:#000;width:79px;text-align:right;">237,50 €</div>
<div class="t" style="left:28px;top:681px;font-size:13px;color:#000;font-weight:bold;">4. Quartal</div>
<div class="t" style="left:155px;top:682px;font-size:12.8px;color:#000;font-weight:bold;width:98px;text-align:right;">100,00 €</div>
<div class="t" style="left:337px;top:682px;font-size:12.8px;color:#000;">-</div>
<div class="t" style="left:260px;top:682px;font-size:12.8px;color:#000;font-weight:bold;width:98px;text-align:right;">€</div>
<div class="t" style="left:365px;top:682px;font-size:12.8px;color:#000;font-weight:bold;width:78px;text-align:right;">19,00 €</div>
<div class="t" style="left:450px;top:682px;font-size:12.8px;color:#000;font-weight:bold;width:69px;text-align:right;">408,50 €</div>
<div class="t" style="left:526px;top:682px;font-size:12.8px;color:#000;font-weight:bold;width:69px;text-align:right;">4.789,92 €</div>
<div class="t" style="left:602px;top:682px;font-size:12.8px;color:#000;font-weight:bold;width:69px;text-align:right;">9,50 €</div>
<div class="t" style="left:726px;top:682px;font-size:12.8px;color:#000;">-</div>
<div class="t" style="left:678px;top:682px;font-size:12.8px;color:#000;font-weight:bold;width:69px;text-align:right;">€</div>
<div class="t" style="left:754px;top:682px;font-size:12.8px;color:#000;font-weight:bold;width:71px;text-align:right;">5.207,92 €</div>
<div class="t" style="left:834px;top:682px;font-size:12.8px;color:#000;">-</div>
<div class="t" style="left:832px;top:682px;font-size:12.8px;color:#000;font-weight:bold;width:79px;text-align:right;">5.188,92 €</div>
<div class="t" style="left:28px;top:702px;font-size:13px;color:#000;font-weight:bold;">Jahr</div>
<div class="t" style="left:155px;top:703px;font-size:12.8px;color:#000;font-weight:bold;width:98px;text-align:right;">51.860,00 €</div>
<div class="t" style="left:337px;top:703px;font-size:12.8px;color:#000;">-</div>
<div class="t" style="left:260px;top:703px;font-size:12.8px;color:#000;font-weight:bold;width:98px;text-align:right;">€</div>
<div class="t" style="left:365px;top:703px;font-size:12.8px;color:#000;font-weight:bold;width:78px;text-align:right;">9.853,40 €</div>
<div class="t" style="left:450px;top:703px;font-size:12.8px;color:#000;font-weight:bold;width:69px;text-align:right;">1.763,20 €</div>
<div class="t" style="left:526px;top:703px;font-size:12.8px;color:#000;font-weight:bold;width:69px;text-align:right;">4.941,92 €</div>
<div class="t" style="left:602px;top:703px;font-size:12.8px;color:#000;font-weight:bold;width:69px;text-align:right;">9,50 €</div>
<div class="t" style="left:678px;top:703px;font-size:12.8px;color:#000;font-weight:bold;width:69px;text-align:right;">228,00 €</div>
<div class="t" style="left:754px;top:703px;font-size:12.8px;color:#000;font-weight:bold;width:71px;text-align:right;">6.942,62 €</div>
<div class="t" style="left:832px;top:703px;font-size:12.8px;color:#000;font-weight:bold;width:79px;text-align:right;">2.910,78 €</div>
<div class="t" style="left:945px;top:439px;font-size:12.8px;color:#000;font-weight:bold;width:194px;text-align:right;">465,50 €</div>
<div class="t" style="left:945px;top:520px;font-size:12.8px;color:#000;font-weight:bold;width:194px;text-align:right;">3.391,50 €</div>
<div class="t" style="left:945px;top:601px;font-size:12.8px;color:#000;font-weight:bold;width:194px;text-align:right;">4.288,30 €</div>
<div class="t" style="left:947px;top:682px;font-size:12.8px;color:#000;">-</div>
<div class="t" style="left:945px;top:682px;font-size:12.8px;color:#000;font-weight:bold;width:194px;text-align:right;">5.188,92 €</div>
<div class="t" style="left:945px;top:703px;font-size:12.8px;color:#000;font-weight:bold;width:194px;text-align:right;">2.956,38 €</div>
<div style="position:absolute;left:25px;top:222px;width:131px;height:23px;border:2px solid #217346;"></div>
<div style="position:absolute;left:151px;top:240px;width:6px;height:6px;background:#217346;border:1px solid #fff;"></div>
<svg style="position:absolute;left:22px;top:10px;" width="15" height="15" viewBox="0 0 15 15"><path d="M0.9 0.9H13.1V13.1H0.9Z" fill="none" stroke="#fff" stroke-width="1.8"/><rect x="0" y="6" width="14" height="8" fill="#fff"/><rect x="2.5" y="8.6" width="3" height="3.4" fill="#217346"/><rect x="7" y="8.6" width="4.6" height="3.4" fill="#217346"/></svg>
<svg style="position:absolute;left:50px;top:9px;" width="17" height="15" viewBox="0 0 17 15"><path d="M3 5.5H9.5A4 4 0 0 1 9.5 13.5H8" fill="none" stroke="#fff" stroke-width="1.9"/><path d="M6.5 1.5L2.5 5.5L6.5 9.5" fill="none" stroke="#fff" stroke-width="1.9"/></svg>
<svg style="position:absolute;left:71.0px;top:14.0px;" width="5" height="3" viewBox="0 0 5 3"><path d="M0 0H5L2.5 3Z" fill="#fff"/></svg>
<svg style="position:absolute;left:85px;top:9px;" width="17" height="15" viewBox="0 0 17 15"><path d="M14 5.5H7.5A4 4 0 0 0 7.5 13.5H9" fill="none" stroke="#5e9c7a" stroke-width="1.9"/><path d="M10.5 1.5L14.5 5.5L10.5 9.5" fill="none" stroke="#5e9c7a" stroke-width="1.9"/></svg>
<svg style="position:absolute;left:107.0px;top:14.0px;" width="5" height="3" viewBox="0 0 5 3"><path d="M0 0H5L2.5 3Z" fill="#5e9c7a"/></svg>
<svg style="position:absolute;left:124px;top:13px;" width="7" height="8" viewBox="0 0 7 8"><path d="M0.5 1.5H6.5" stroke="#fff" stroke-width="1.1"/><path d="M0 3.5H7L3.5 7.5Z" fill="#fff"/></svg>
<div class="t" style="left:491.9px;top:11px;font-size:12px;color:#fff;transform:scaleX(0.9608);transform-origin:0 0;">EÜR-2018-Vorsteuerabzugsberechtigt-Muster.xlsx&nbsp; -&nbsp; Excel</div>
<div class="t" style="left:1026.4px;top:10px;font-size:12px;color:#fff;transform:scaleX(1.0308);transform-origin:0 0;">Anmelden</div>
<svg style="position:absolute;left:1117px;top:10px;" width="15" height="11" viewBox="0 0 15 11"><rect x="0.5" y="0.5" width="14" height="10" fill="none" stroke="#fff"/><path d="M1 2.5H14" stroke="#fff"/><path d="M7.5 9V4.5M5 7L7.5 4.5L10 7" fill="none" stroke="#fff"/></svg>
<div style="position:absolute;left:1166px;top:15px;width:10px;height:1px;background:#fff;"></div>
<svg style="position:absolute;left:1211px;top:10px;" width="12" height="11" viewBox="0 0 12 11"><rect x="0.5" y="0.5" width="10" height="10" fill="none" stroke="#fff"/></svg>
<svg style="position:absolute;left:1257px;top:10px;" width="12" height="11" viewBox="0 0 12 11"><path d="M0.5 0.5L10.5 10.5M10.5 0.5L0.5 10.5" stroke="#fff" stroke-width="1.1"/></svg>
<div style="position:absolute;left:61px;top:35px;width:51px;height:30px;background:#f3f3f3;"></div>
<div class="t" style="left:15.9px;top:45px;font-size:11.5px;color:#fff;transform:scaleX(0.9945);transform-origin:0 0;">Datei</div>
<div class="t" style="left:73.4px;top:45px;font-size:11.5px;color:#217346;transform:scaleX(1.0294);transform-origin:0 0;">Start</div>
<div class="t" style="left:126.80000000000001px;top:45px;font-size:11.5px;color:#fff;transform:scaleX(1.0418);transform-origin:0 0;">Einfügen</div>
<div class="t" style="left:202.3px;top:45px;font-size:11.5px;color:#fff;transform:scaleX(1.0490);transform-origin:0 0;">Seitenlayout</div>
<div class="t" style="left:296.59999999999997px;top:45px;font-size:11.5px;color:#fff;transform:scaleX(1.0503);transform-origin:0 0;">Formeln</div>
<div class="t" style="left:369.59999999999997px;top:45px;font-size:11.5px;color:#fff;transform:scaleX(1.0102);transform-origin:0 0;">Daten</div>
<div class="t" style="left:429.9px;top:45px;font-size:11.5px;color:#fff;transform:scaleX(1.0498);transform-origin:0 0;">Überprüfen</div>
<div class="t" style="left:518.5px;top:45px;font-size:11.5px;color:#fff;transform:scaleX(1.0819);transform-origin:0 0;">Ansicht</div>
<svg style="position:absolute;left:588px;top:42px;" width="12" height="15" viewBox="0 0 12 15"><path d="M6 1A4.5 4.5 0 0 0 3.5 9.2V11H8.5V9.2A4.5 4.5 0 0 0 6 1Z" fill="none" stroke="#fff" stroke-width="1.1"/><path d="M3.8 13H8.2" stroke="#fff" stroke-width="1.1"/></svg>
<div class="t" style="left:604.9px;top:45px;font-size:11.5px;color:#d5e6dc;transform:scaleX(1.0193);transform-origin:0 0;">Was möchten Sie tun?</div>
<div style="position:absolute;left:1184px;top:35px;width:86px;height:29px;background:#0e5a31;"></div>
<svg style="position:absolute;left:1190px;top:41px;" width="17" height="17" viewBox="0 0 17 17"><circle cx="7" cy="5.5" r="4" fill="none" stroke="#fff" stroke-width="1.3"/><path d="M1.5 16C2 12 4 10 7 10C8 10 8.8 10.2 9.5 10.6" fill="none" stroke="#fff" stroke-width="1.3"/><path d="M12.5 10.5V16.5M9.5 13.5H15.5" stroke="#fff" stroke-width="1.3"/></svg>
<div class="t" style="left:1209.4px;top:45px;font-size:11.8px;color:#fff;transform:scaleX(0.9899);transform-origin:0 0;">Freigeben</div>
<div style="position:absolute;left:105px;top:70px;width:1px;height:83px;background:#d6d6d6;"></div>
<div style="position:absolute;left:311px;top:70px;width:1px;height:83px;background:#d6d6d6;"></div>
<div style="position:absolute;left:478px;top:70px;width:1px;height:83px;background:#d6d6d6;"></div>
<div style="position:absolute;left:618px;top:70px;width:1px;height:83px;background:#d6d6d6;"></div>
<div style="position:absolute;left:906px;top:70px;width:1px;height:83px;background:#d6d6d6;"></div>
<div style="position:absolute;left:1004px;top:70px;width:1px;height:83px;background:#d6d6d6;"></div>
<div style="position:absolute;left:1195px;top:70px;width:1px;height:83px;background:#d6d6d6;"></div>
<div class="t" style="left:1.4px;top:144px;font-size:11.5px;color:#555;transform:scaleX(1.0131);transform-origin:0 0;">Zwischenablage</div>
<svg style="position:absolute;left:94px;top:146px;" width="8" height="7" viewBox="0 0 8 7"><path d="M0.5 6.5V0.5H6.5" fill="none" stroke="#777"/><path d="M2.5 2.5L6.5 6.5M3.5 6.5H7V3" fill="none" stroke="#777"/></svg>
<div class="t" style="left:176.6px;top:144px;font-size:11.5px;color:#555;transform:scaleX(1.0388);transform-origin:0 0;">Schriftart</div>
<svg style="position:absolute;left:301px;top:146px;" width="8" height="7" viewBox="0 0 8 7"><path d="M0.5 6.5V0.5H6.5" fill="none" stroke="#777"/><path d="M2.5 2.5L6.5 6.5M3.5 6.5H7V3" fill="none" stroke="#777"/></svg>
<div class="t" style="left:355.4px;top:144px;font-size:11.5px;color:#555;transform:scaleX(1.0489);transform-origin:0 0;">Ausrichtung</div>
<svg style="position:absolute;left:467px;top:146px;" width="8" height="7" viewBox="0 0 8 7"><path d="M0.5 6.5V0.5H6.5" fill="none" stroke="#777"/><path d="M2.5 2.5L6.5 6.5M3.5 6.5H7V3" fill="none" stroke="#777"/></svg>
<div class="t" style="left:528.4px;top:144px;font-size:11.5px;color:#555;transform:scaleX(1.0236);transform-origin:0 0;">Zahl</div>
<svg style="position:absolute;left:607px;top:146px;" width="8" height="7" viewBox="0 0 8 7"><path d="M0.5 6.5V0.5H6.5" fill="none" stroke="#777"/><path d="M2.5 2.5L6.5 6.5M3.5 6.5H7V3" fill="none" stroke="#777"/></svg>
<div class="t" style="left:722.0px;top:144px;font-size:11.5px;color:#555;transform:scaleX(1.0107);transform-origin:0 0;">Formatvorlagen</div>
<div class="t" style="left:939.4px;top:144px;font-size:11.5px;color:#555;transform:scaleX(0.9961);transform-origin:0 0;">Zellen</div>
<div class="t" style="left:1072.2px;top:144px;font-size:11.5px;color:#555;transform:scaleX(1.0067);transform-origin:0 0;">Bearbeiten</div>
<svg style="position:absolute;left:1267px;top:145px;" width="10" height="8" viewBox="0 0 10 8"><path d="M1 6.5L5 2.5L9 6.5" fill="none" stroke="#777" stroke-width="2"/></svg>
<svg style="position:absolute;left:22px;top:72px;" width="31" height="32" viewBox="0 0 31 32"><rect x="1" y="4" width="24" height="25" rx="1" fill="#d4d2d4"/><rect x="6" y="2" width="14" height="5" rx="1" fill="#b9b7b9"/><rect x="10.5" y="0" width="5" height="4" rx="1" fill="#b9b7b9"/><circle cx="13" cy="2.2" r="1" fill="#f3f3f3"/><path d="M15.5 12.5H25L29.5 17V30.5H15.5Z" fill="#f5f2f5" stroke="#b4b4b4"/><path d="M25 12.5V17H29.5" fill="none" stroke="#b4b4b4"/></svg>
<div class="t" style="left:10.9px;top:108px;font-size:11.7px;color:#8c8c8c;transform:scaleX(1.0241);transform-origin:0 0;">Einfügen</div>
<svg style="position:absolute;left:32.5px;top:127.5px;" width="5" height="3" viewBox="0 0 5 3"><path d="M0 0H5L2.5 3Z" fill="#aaa"/></svg>
<svg style="position:absolute;left:64px;top:71px;" width="16" height="16" viewBox="0 0 16 16"><path d="M4 1L11 10M12 1L5 10" stroke="#666" stroke-width="1.6"/><circle cx="4" cy="12" r="2.6" fill="none" stroke="#3b7ac4" stroke-width="1.3"/><circle cx="12" cy="12" r="2.6" fill="none" stroke="#3b7ac4" stroke-width="1.3"/></svg>
<svg style="position:absolute;left:63px;top:94px;" width="17" height="16" viewBox="0 0 17 16"><path d="M1.5 1.5H7L9 3.5V11.5H1.5Z" fill="#fff" stroke="#444"/><path d="M6.5 5.5H12L14.5 8V15H6.5Z" fill="#fff" stroke="#444"/><path d="M3 5H7M3 7.5H6M8 9.5H13M8 11.5H13M8 13.5H12" stroke="#3b7ac4"/></svg>
<svg style="position:absolute;left:86.5px;top:100.5px;" width="5" height="3" viewBox="0 0 5 3"><path d="M0 0H5L2.5 3Z" fill="#555"/></svg>
<svg style="position:absolute;left:64px;top:117px;" width="16" height="16" viewBox="0 0 16 16"><path d="M9 5L13 1.5L15 3.5L11.5 7.5Z" fill="#6a6a6a"/><path d="M7 5L11 9L6 15L1 10Z" fill="#e1b663"/><path d="M7 5L11 9L9.5 10.5L5.5 6.5Z" fill="#6a6a6a"/></svg>
<div style="position:absolute;left:110px;top:76px;width:111px;height:23px;background:#fff;border:1px solid #c6c6c6;"></div>
<div style="position:absolute;left:221px;top:76px;width:43px;height:23px;background:#fff;border:1px solid #c6c6c6;"></div>
<div class="t" style="left:112.9px;top:83px;font-size:11.8px;color:#262626;transform:scaleX(1.0316);transform-origin:0 0;">Calibri</div>
<div class="t" style="left:224.0px;top:83px;font-size:11.8px;color:#262626;transform:scaleX(0.9225);transform-origin:0 0;">11</div>
<svg style="position:absolute;left:211.0px;top:86.0px;" width="5" height="3" viewBox="0 0 5 3"><path d="M0 0H5L2.5 3Z" fill="#555"/></svg>
<svg style="position:absolute;left:254.0px;top:86.0px;" width="5" height="3" viewBox="0 0 5 3"><path d="M0 0H5L2.5 3Z" fill="#555"/></svg>
<svg style="position:absolute;left:269px;top:82px;" width="12" height="12" viewBox="0 0 12 12"><path d="M1.5 11.2L5.6 1.2H6.4L10.5 11.2M3.3 7.8H8.7" fill="none" stroke="#555" stroke-width="1.7"/></svg>
<svg style="position:absolute;left:278px;top:80px;" width="6" height="3" viewBox="0 0 6 3"><path d="M0 3L3 0L6 3Z" fill="#3b7ac4"/></svg>
<svg style="position:absolute;left:292px;top:85px;" width="10" height="9" viewBox="0 0 10 9"><path d="M1.3 8.2L4.6 0.8H5.4L8.7 8.2M2.6 5.6H7.4" fill="none" stroke="#555" stroke-width="1.6"/></svg>
<svg style="position:absolute;left:300px;top:80px;" width="6" height="3" viewBox="0 0 6 3"><path d="M0 0H6L3 3Z" fill="#3b7ac4"/></svg>
<div class="t" style="left:118px;top:112px;font-size:12px;color:#444;font-weight:bold;">F</div>
<div class="t" style="left:138px;top:112px;font-size:12px;color:#555;font-weight:bold;font-style:italic;">K</div>
<div class="t" style="left:160.5px;top:112px;font-size:12px;color:#444;font-weight:bold;">U</div>
<div style="position:absolute;left:160px;top:123px;width:9px;height:1px;background:#444;"></div>
<svg style="position:absolute;left:179.0px;top:117.0px;" width="5" height="3" viewBox="0 0 5 3"><path d="M0 0H5L2.5 3Z" fill="#555"/></svg>
<div style="position:absolute;left:192px;top:108px;width:1px;height:22px;background:#d6d6d6;"></div>
<svg style="position:absolute;left:201px;top:111px;" width="14" height="14" viewBox="0 0 14 14"><g fill="#555"><rect x="0" y="0" width="1" height="1"/><rect x="0" y="0" width="1" height="1"/><rect x="0" y="6" width="1" height="1"/><rect x="6" y="0" width="1" height="1"/><rect x="0" y="12" width="1" height="1"/><rect x="12" y="0" width="1" height="1"/><rect x="2" y="0" width="1" height="1"/><rect x="0" y="2" width="1" height="1"/><rect x="2" y="6" width="1" height="1"/><rect x="6" y="2" width="1" height="1"/><rect x="2" y="12" width="1" height="1"/><rect x="12" y="2" width="1" height="1"/><rect x="4" y="0" width="1" height="1"/><rect x="0" y="4" width="1" height="1"/><rect x="4" y="6" width="1" height="1"/><rect x="6" y="4" width="1" height="1"/><rect x="4" y="12" width="1" height="1"/><rect x="12" y="4" width="1" height="1"/><rect x="6" y="0" width="1" height="1"/><rect x="0" y="6" width="1" height="1"/><rect x="6" y="6" width="1" height="1"/><rect x="6" y="6" width="1" height="1"/><rect x="6" y="12" width="1" height="1"/><rect x="12" y="6" width="1" height="1"/><rect x="8" y="0" width="1" height="1"/><rect x="0" y="8" width="1" height="1"/><rect x="8" y="6" width="1" height="1"/><rect x="6" y="8" width="1" height="1"/><rect x="8" y="12" width="1" height="1"/><rect x="12" y="8" width="1" height="1"/><rect x="10" y="0" width="1" height="1"/><rect x="0" y="10" width="1" height="1"/><rect x="10" y="6" width="1" height="1"/><rect x="6" y="10" width="1" height="1"/><rect x="10" y="12" width="1" height="1"/><rect x="12" y="10" width="1" height="1"/><rect x="12" y="0" width="1" height="1"/><rect x="0" y="12" width="1" height="1"/><rect x="12" y="6" width="1" height="1"/><rect x="6" y="12" width="1" height="1"/><rect x="12" y="12" width="1" height="1"/><rect x="12" y="12" width="1" height="1"/></g><rect x="0" y="12" width="13" height="1.2" fill="#555"/></svg>
<svg style="position:absolute;left:222.0px;top:117.0px;" width="5" height="3" viewBox="0 0 5 3"><path d="M0 0H5L2.5 3Z" fill="#555"/></svg>
<div style="position:absolute;left:235px;top:108px;width:1px;height:22px;background:#d6d6d6;"></div>
<svg style="position:absolute;left:242px;top:108px;" width="19" height="19" viewBox="0 0 19 19"><path d="M3 8L8.5 2.5L13.5 7.5L8 13Z" fill="#fff" stroke="#555" stroke-width="1.2"/><path d="M6.5 1V7" stroke="#555"/><path d="M14 8C15.5 9.5 16 11 15 12" stroke="#3b7ac4" stroke-width="2" fill="none"/><rect x="1" y="14" width="16" height="4" fill="#ffff00"/></svg>
<svg style="position:absolute;left:265.0px;top:117.0px;" width="5" height="3" viewBox="0 0 5 3"><path d="M0 0H5L2.5 3Z" fill="#555"/></svg>
<svg style="position:absolute;left:276px;top:108px;" width="18" height="19" viewBox="0 0 18 19"><path d="M5 13.5L8.4 4H9.6L13 13.5M6.5 10H11.5" fill="none" stroke="#555" stroke-width="2"/><rect x="1" y="14" width="16" height="4" fill="#ff0000"/></svg>
<svg style="position:absolute;left:299.0px;top:117.0px;" width="5" height="3" viewBox="0 0 5 3"><path d="M0 0H5L2.5 3Z" fill="#555"/></svg>
<div style="position:absolute;left:321px;top:79px;width:14px;height:1px;background:#666;"></div>
<div style="position:absolute;left:321px;top:82px;width:14px;height:1px;background:#666;"></div>
<div style="position:absolute;left:321px;top:85px;width:14px;height:1px;background:#666;"></div>
<div style="position:absolute;left:343px;top:83px;width:14px;height:1px;background:#666;"></div>
<div style="position:absolute;left:343px;top:86px;width:14px;height:1px;background:#666;"></div>
<div style="position:absolute;left:343px;top:89px;width:14px;height:1px;background:#666;"></div>
<div style="position:absolute;left:361px;top:76px;width:22px;height:23px;background:#c5c5c5;"></div>
<div style="position:absolute;left:365px;top:88px;width:14px;height:1px;background:#666;"></div>
<div style="position:absolute;left:365px;top:91px;width:14px;height:1px;background:#666;"></div>
<div style="position:absolute;left:365px;top:94px;width:14px;height:1px;background:#666;"></div>
<svg style="position:absolute;left:387px;top:77px;" width="20" height="18" viewBox="0 0 20 18"><text x="0" y="0" font-family="Liberation Sans" font-size="10.5" fill="#555" transform="translate(4.2 13.2) rotate(-45)">ab</text><path d="M8.5 16.5L17.5 7.5" stroke="#555" stroke-width="1.2"/><path d="M14 7H18V11" fill="none" stroke="#555" stroke-width="1.2"/></svg>
<svg style="position:absolute;left:409.0px;top:86.0px;" width="5" height="3" viewBox="0 0 5 3"><path d="M0 0H5L2.5 3Z" fill="#555"/></svg>
<div style="position:absolute;left:434px;top:75px;width:1px;height:55px;background:#d6d6d6;"></div>
<div style="position:absolute;left:439px;top:76px;width:22px;height:23px;background:#c5c5c5;"></div>
<svg style="position:absolute;left:441px;top:77px;" width="18" height="18" viewBox="0 0 18 18"><rect x="1.5" y="2.5" width="9" height="4" fill="#fff" stroke="#555"/><path d="M2.5 4.5H15.5" stroke="#3b7ac4" stroke-width="1.1"/><rect x="1.5" y="9.5" width="9" height="7" fill="#fff" stroke="#555"/><path d="M3 12H9M3 14H9" stroke="#3b7ac4" stroke-width="1.1"/><path d="M16.3 8.2C16.5 11 14.5 12.8 11.5 12.8M13.6 10.6L11.3 12.8L13.6 15" fill="none" stroke="#3b7ac4" stroke-width="1.3"/></svg>
<div style="position:absolute;left:321px;top:113px;width:14px;height:1px;background:#666;"></div>
<div style="position:absolute;left:321px;top:116px;width:9px;height:1px;background:#666;"></div>
<div style="position:absolute;left:321px;top:119px;width:14px;height:1px;background:#666;"></div>
<div style="position:absolute;left:321px;top:122px;width:9px;height:1px;background:#666;"></div>
<div style="position:absolute;left:343px;top:113px;width:14px;height:1px;background:#666;"></div>
<div style="position:absolute;left:345px;top:116px;width:10px;height:1px;background:#666;"></div>
<div style="position:absolute;left:343px;top:119px;width:14px;height:1px;background:#666;"></div>
<div style="position:absolute;left:345px;top:122px;width:10px;height:1px;background:#666;"></div>
<div style="position:absolute;left:365px;top:113px;width:14px;height:1px;background:#666;"></div>
<div style="position:absolute;left:370px;top:116px;width:9px;height:1px;background:#666;"></div>
<div style="position:absolute;left:365px;top:119px;width:14px;height:1px;background:#666;"></div>
<div style="position:absolute;left:370px;top:122px;width:9px;height:1px;background:#666;"></div>
<div style="position:absolute;left:389px;top:111px;width:16px;height:1px;background:#666;"></div>
<div style="position:absolute;left:397px;top:114px;width:8px;height:1px;background:#666;"></div>
<div style="position:absolute;left:397px;top:117px;width:8px;height:1px;background:#666;"></div>
<div style="position:absolute;left:397px;top:120px;width:8px;height:1px;background:#666;"></div>
<div style="position:absolute;left:389px;top:123px;width:16px;height:1px;background:#666;"></div>
<svg style="position:absolute;left:389px;top:112px;" width="8" height="9" viewBox="0 0 8 9"><path d="M7 4.5H1.5M4 1.5L1 4.5L4 7.5" fill="none" stroke="#3b7ac4" stroke-width="1.8"/></svg>
<div style="position:absolute;left:411px;top:111px;width:16px;height:1px;background:#666;"></div>
<div style="position:absolute;left:419px;top:114px;width:8px;height:1px;background:#666;"></div>
<div style="position:absolute;left:419px;top:117px;width:8px;height:1px;background:#666;"></div>
<div style="position:absolute;left:419px;top:120px;width:8px;height:1px;background:#666;"></div>
<div style="position:absolute;left:411px;top:123px;width:16px;height:1px;background:#666;"></div>
<svg style="position:absolute;left:411px;top:112px;" width="8" height="9" viewBox="0 0 8 9"><path d="M0 4.5H6M3.5 1.5L6.5 4.5L3.5 7.5" fill="none" stroke="#3b7ac4" stroke-width="1.8"/></svg>
<svg style="position:absolute;left:442px;top:110px;" width="15" height="15" viewBox="0 0 15 15"><rect x="0.5" y="0.5" width="14" height="14" fill="#fff" stroke="#666"/><path d="M0.5 3.5H14.5M0.5 11.5H14.5M7.5 0.5V3.5M7.5 11.5V14.5" stroke="#666"/><path d="M2.5 7.5H12.5M4.2 6L2.5 7.5L4.2 9M10.8 6L12.5 7.5L10.8 9" fill="none" stroke="#3b7ac4" stroke-width="1.1"/></svg>
<svg style="position:absolute;left:464.0px;top:117.0px;" width="5" height="3" viewBox="0 0 5 3"><path d="M0 0H5L2.5 3Z" fill="#555"/></svg>
<div style="position:absolute;left:483px;top:76px;width:131px;height:23px;background:#fff;border:1px solid #c6c6c6;"></div>
<div class="t" style="left:485.9px;top:82px;font-size:11.8px;color:#262626;transform:scaleX(0.9877);transform-origin:0 0;">Standard</div>
<svg style="position:absolute;left:604.0px;top:86.0px;" width="5" height="3" viewBox="0 0 5 3"><path d="M0 0H5L2.5 3Z" fill="#555"/></svg>
<svg style="position:absolute;left:485px;top:109px;" width="19" height="19" viewBox="0 0 19 19"><rect x="1.8" y="1.8" width="14.4" height="7" fill="#fff" stroke="#3b7ac4" stroke-width="1.8"/><circle cx="8" cy="5" r="2.1" fill="#3b7ac4"/><ellipse cx="13.5" cy="9.2" rx="3.6" ry="1.5" fill="#e8c27a"/><ellipse cx="13.5" cy="11.4" rx="3.6" ry="1.5" fill="#e8c27a"/><ellipse cx="8.5" cy="13.2" rx="3.6" ry="1.5" fill="#e8c27a"/><ellipse cx="8.5" cy="15.6" rx="3.6" ry="1.5" fill="#e8c27a"/></svg>
<svg style="position:absolute;left:508.0px;top:117.0px;" width="5" height="3" viewBox="0 0 5 3"><path d="M0 0H5L2.5 3Z" fill="#555"/></svg>
<div class="t" style="left:522.1px;top:113px;font-size:13.5px;color:#555;font-weight:bold;transform:scaleX(1.0413);transform-origin:0 0;">%</div>
<div class="t" style="left:542.4px;top:113px;font-size:9.5px;color:#444;font-weight:bold;transform:scaleX(0.9589);transform-origin:0 0;">000</div>
<div style="position:absolute;left:565px;top:107px;width:1px;height:23px;background:#d6d6d6;"></div>
<svg style="position:absolute;left:572px;top:110px;" width="17" height="16" viewBox="0 0 17 16"><path d="M8 4.5H1.8M4 2.3L1.8 4.5L4 6.7" fill="none" stroke="#3b7ac4" stroke-width="1.3"/><text x="10.3" y="6.3" font-family="Liberation Sans" font-size="8.2" fill="#444">0</text><text x="2.6" y="14.3" font-family="Liberation Sans" font-size="8.2" fill="#444">,00</text></svg>
<svg style="position:absolute;left:594px;top:110px;" width="17" height="16" viewBox="0 0 17 16"><text x="2.8" y="6.3" font-family="Liberation Sans" font-size="8.2" fill="#444">,00</text><text x="7.6" y="14.3" font-family="Liberation Sans" font-size="8.2" fill="#444">,0</text><path d="M1 11.5H7.2M5 9.3L7.2 11.5L5 13.7" fill="none" stroke="#3b7ac4" stroke-width="1.3"/></svg>
<svg style="position:absolute;left:651px;top:72px;" width="31" height="32" viewBox="0 0 31 32"><rect x="0.5" y="0.5" width="23" height="24" fill="#fff" stroke="#777"/><path d="M6.5 0.5V24.5M12.5 0.5V24.5M18.5 0.5V24.5M0.5 6.5H23.5M0.5 12.5H23.5M0.5 18.5H23.5" stroke="#999"/><rect x="7" y="1" width="5" height="5" fill="#e15d3a"/><rect x="7" y="7" width="11" height="5" fill="#3b7ac4"/><rect x="7" y="13" width="8" height="5" fill="#e15d3a"/><rect x="7" y="19" width="4" height="5" fill="#3b7ac4"/><rect x="14.5" y="17.5" width="15" height="13" fill="#fff" stroke="#666"/><path d="M18.5 22H25.5M18.5 25H25.5M24 19.5L20 27.5" stroke="#444" stroke-width="1.2"/></svg>
<div class="t" style="left:641.9px;top:108px;font-size:11.7px;color:#444;transform:scaleX(1.0327);transform-origin:0 0;">Bedingte</div>
<div class="t" style="left:624.6999999999999px;top:124px;font-size:11.7px;color:#444;transform:scaleX(1.0478);transform-origin:0 0;">Formatierung</div>
<svg style="position:absolute;left:700.0px;top:127.5px;" width="5" height="3" viewBox="0 0 5 3"><path d="M0 0H5L2.5 3Z" fill="#555"/></svg>
<svg style="position:absolute;left:731px;top:74px;" width="32" height="30" viewBox="0 0 32 30"><rect x="0.5" y="0.5" width="24" height="20" fill="#fff" stroke="#777"/><rect x="6" y="6" width="18" height="14" fill="#c5d9ef"/><path d="M6.5 0.5V20.5M12.5 0.5V20.5M18.5 0.5V20.5M0.5 5.5H24.5M0.5 10.5H24.5M0.5 15.5H24.5" stroke="#999"/><path d="M20 14L28 5L31 7L24 17Z" fill="#777"/><path d="M14 20C16 16 20 15 23 17C22 22 18 25 9 28C11 25 12 22 14 20Z" fill="#3b7ac4"/></svg>
<div class="t" style="left:716.4px;top:108px;font-size:11.7px;color:#444;transform:scaleX(1.0147);transform-origin:0 0;">Als Tabelle</div>
<div class="t" style="left:709.4px;top:124px;font-size:11.7px;color:#444;transform:scaleX(1.0613);transform-origin:0 0;">formatieren</div>
<svg style="position:absolute;left:775.5px;top:127.5px;" width="5" height="3" viewBox="0 0 5 3"><path d="M0 0H5L2.5 3Z" fill="#555"/></svg>
<svg style="position:absolute;left:828px;top:72px;" width="32" height="30" viewBox="0 0 32 30"><rect x="0.5" y="0.5" width="24" height="20" fill="#fff" stroke="#777"/><rect x="6" y="5" width="13" height="11" fill="#c5d9ef"/><path d="M0.5 5.5H24.5M0.5 15.5H24.5M6.5 0.5V20.5M18.5 0.5V20.5" stroke="#999"/><path d="M20 14L28 5L31 7L24 17Z" fill="#777"/><path d="M14 20C16 16 20 15 23 17C22 22 18 25 9 28C11 25 12 22 14 20Z" fill="#3b7ac4"/></svg>
<div class="t" style="left:784.4px;top:108px;font-size:11.7px;color:#444;transform:scaleX(1.0418);transform-origin:0 0;">Zellenformatvorlagen</div>
<svg style="position:absolute;left:839.5px;top:128.0px;" width="5" height="3" viewBox="0 0 5 3"><path d="M0 0H5L2.5 3Z" fill="#555"/></svg>
<svg style="position:absolute;left:914px;top:71px;" width="17" height="17" viewBox="0 0 17 17"><path d="M0.5 0.5H8.5V4.5H0.5ZM4.5 0.5V4.5M0.5 10.5H8.5V15.5H0.5ZM0.5 13H8.5M4.5 10.5V15.5" fill="#fff" stroke="#555"/><path d="M8.5 4.5V5.5M8.5 9.5V10.5" stroke="#555"/><rect x="8.5" y="5.5" width="7.5" height="4" fill="#c5d9ef" stroke="#555"/><path d="M12.2 5.5V9.5" stroke="#555"/><path d="M7.5 7.5H1.8M4.2 5.1L1.8 7.5L4.2 9.9" fill="none" stroke="#3b7ac4" stroke-width="1.7"/></svg>
<svg style="position:absolute;left:914px;top:94px;" width="17" height="17" viewBox="0 0 17 17"><path d="M0.5 0.5H8.5V4.5H0.5ZM4.5 0.5V4.5M0.5 10.5H8.5V15.5H0.5ZM0.5 13H8.5M4.5 10.5V15.5" fill="#fff" stroke="#555"/><path d="M0.5 4.5V10.5M8.5 4.5V5.5" stroke="#555"/><rect x="3.5" y="5.5" width="4" height="3" fill="#c5d9ef" stroke="#555"/><path d="M9 3.5L15.8 10.5M15.8 3.5L9 10.5" stroke="#e0603f" stroke-width="1.7"/></svg>
<svg style="position:absolute;left:914px;top:116px;" width="17" height="17" viewBox="0 0 17 17"><path d="M1.5 1.5H13M1 0V3M13.5 0V3" stroke="#3b7ac4"/><path d="M3.5 0L1.5 1.5L3.5 3M11 0L13 1.5L11 3" fill="none" stroke="#3b7ac4"/><rect x="0.5" y="5.5" width="14" height="9" fill="#fff" stroke="#555"/><path d="M0.5 8.5H14.5M0.5 11.5H14.5M4.5 5.5V14.5M9.5 5.5V14.5" stroke="#999"/><rect x="4.5" y="8" width="5" height="4" fill="#3b7ac4"/><path d="M1.5 16H6.5M8.5 16H13.5" stroke="#888"/></svg>
<div class="t" style="left:932.9px;top:74px;font-size:11.7px;color:#444;transform:scaleX(1.0241);transform-origin:0 0;">Einfügen</div>
<div class="t" style="left:932.9px;top:97px;font-size:11.7px;color:#444;transform:scaleX(1.0060);transform-origin:0 0;">Löschen</div>
<div class="t" style="left:932.9px;top:120px;font-size:11.7px;color:#444;transform:scaleX(1.0444);transform-origin:0 0;">Format</div>
<svg style="position:absolute;left:989.5px;top:78.0px;" width="5" height="3" viewBox="0 0 5 3"><path d="M0 0H5L2.5 3Z" fill="#555"/></svg>
<svg style="position:absolute;left:987.0px;top:101.0px;" width="5" height="3" viewBox="0 0 5 3"><path d="M0 0H5L2.5 3Z" fill="#555"/></svg>
<svg style="position:absolute;left:974.0px;top:124.5px;" width="5" height="3" viewBox="0 0 5 3"><path d="M0 0H5L2.5 3Z" fill="#555"/></svg>
<svg style="position:absolute;left:1011px;top:71px;" width="17" height="15" viewBox="0 0 17 15"><path d="M15 3V1H2L8 7.5L2 14H15V12" fill="none" stroke="#444" stroke-width="2.2"/></svg>
<svg style="position:absolute;left:1034.0px;top:78.0px;" width="5" height="3" viewBox="0 0 5 3"><path d="M0 0H5L2.5 3Z" fill="#555"/></svg>
<svg style="position:absolute;left:1012px;top:94px;" width="16" height="16" viewBox="0 0 16 16"><rect x="0.5" y="0.5" width="14" height="15" fill="#fff" stroke="#555"/><rect x="0" y="0" width="15" height="3" fill="#555"/><path d="M7.5 5V12M4.5 9L7.5 12L10.5 9" fill="none" stroke="#3b7ac4" stroke-width="2"/></svg>
<svg style="position:absolute;left:1032.5px;top:101.0px;" width="5" height="3" viewBox="0 0 5 3"><path d="M0 0H5L2.5 3Z" fill="#555"/></svg>
<svg style="position:absolute;left:1012px;top:117px;" width="15" height="15" viewBox="0 0 15 15"><path d="M9 1L14 6L7 13L2 8Z" fill="#ec8b9c"/><path d="M2 8L5 11L3.5 13L0.5 10Z" fill="#ec8b9c"/><path d="M4.5 10L5.5 11" stroke="#f3f3f3"/></svg>
<svg style="position:absolute;left:1032.5px;top:123.5px;" width="5" height="3" viewBox="0 0 5 3"><path d="M0 0H5L2.5 3Z" fill="#555"/></svg>
<svg style="position:absolute;left:1066px;top:73px;" width="32" height="29" viewBox="0 0 32 29"><path d="M2.3 12.7L6.3 1.2H7.7L11.7 12.7M3.9 8.6H10.1" fill="none" stroke="#3b7ac4" stroke-width="2"/><path d="M2.5 16H11L2.5 25.5H11.8" fill="none" stroke="#9d5bd2" stroke-width="2"/><path d="M12 8H30L23 16V24H19V16Z" fill="#777"/><path d="M20.5 16V22.5" stroke="#f3f3f3" stroke-width="1.2"/></svg>
<div class="t" style="left:1045.8000000000002px;top:108px;font-size:11.7px;color:#444;transform:scaleX(1.0136);transform-origin:0 0;">Sortieren und</div>
<div class="t" style="left:1060.9px;top:124px;font-size:11.7px;color:#444;transform:scaleX(1.0183);transform-origin:0 0;">Filtern</div>
<svg style="position:absolute;left:1097.0px;top:127.5px;" width="5" height="3" viewBox="0 0 5 3"><path d="M0 0H5L2.5 3Z" fill="#555"/></svg>
<svg style="position:absolute;left:1140px;top:72px;" width="30" height="29" viewBox="0 0 30 29"><circle cx="18" cy="11" r="8.3" fill="none" stroke="#3b7ac4" stroke-width="2.6"/><path d="M11.5 17.5L3 26" stroke="#3b7ac4" stroke-width="3.6" stroke-linecap="round"/></svg>
<div class="t" style="left:1123.9px;top:108px;font-size:11.7px;color:#444;transform:scaleX(1.0167);transform-origin:0 0;">Suchen und</div>
<div class="t" style="left:1121.4px;top:124px;font-size:11.7px;color:#444;transform:scaleX(1.0308);transform-origin:0 0;">Auswählen</div>
<svg style="position:absolute;left:1183.0px;top:127.5px;" width="5" height="3" viewBox="0 0 5 3"><path d="M0 0H5L2.5 3Z" fill="#555"/></svg>
<div style="position:absolute;left:6px;top:168px;width:101px;height:26px;background:#fdfdfd;border:1px solid #c6c6c6;border-left:none;"></div>
<div class="t" style="left:11.8px;top:176px;font-size:12.5px;color:#333;transform:scaleX(1.0792);transform-origin:0 0;">A1</div>
<svg style="position:absolute;left:93.0px;top:178.5px;" width="7" height="4" viewBox="0 0 7 4"><path d="M0 0H7L3.5 4Z" fill="#666"/></svg>
<div style="position:absolute;left:121px;top:176px;width:2px;height:2px;background:#999;"></div>
<div style="position:absolute;left:121px;top:181px;width:2px;height:2px;background:#999;"></div>
<div style="position:absolute;left:121px;top:185px;width:2px;height:2px;background:#999;"></div>
<div style="position:absolute;left:137px;top:168px;width:110px;height:26px;background:#fdfdfd;border:1px solid #c6c6c6;"></div>
<svg style="position:absolute;left:151px;top:177px;" width="11" height="10" viewBox="0 0 11 10"><path d="M1 0.5L10 9.5M10 0.5L1 9.5" stroke="#b0b0b0" stroke-width="1.3"/></svg>
<svg style="position:absolute;left:186px;top:176px;" width="13" height="10" viewBox="0 0 13 10"><path d="M1 5L4.5 9L12 1" fill="none" stroke="#b8b8b8" stroke-width="2"/></svg>
<svg style="position:absolute;left:221px;top:173px;" width="14" height="15" viewBox="0 0 14 15"><text x="0.5" y="12" font-family="Liberation Serif" font-style="italic" font-weight="bold" font-size="14" fill="#555">f</text><text x="6.3" y="11.5" font-family="Liberation Serif" font-style="italic" font-weight="bold" font-size="11.5" fill="#555">x</text></svg>
<div style="position:absolute;left:250px;top:168px;width:1029px;height:26px;background:#fdfdfd;border:1px solid #c6c6c6;border-right:none;"></div>
<svg style="position:absolute;left:1268px;top:177px;" width="10" height="7" viewBox="0 0 10 7"><path d="M1 1.5L5 5.5L9 1.5" fill="none" stroke="#777" stroke-width="2"/></svg>
<svg style="position:absolute;left:10px;top:208px;" width="13" height="12" viewBox="0 0 13 12"><path d="M12 0V11.5H0Z" fill="#b5b5b5"/></svg>
<div style="position:absolute;left:1265px;top:204px;width:14px;height:567px;background:#e6e6e6;"></div>
<div style="position:absolute;left:1268px;top:206px;width:11px;height:15px;background:#fdfdfd;border:1px solid #c6c6c6;border-right:none;"></div>
<svg style="position:absolute;left:1270px;top:211px;" width="9" height="5" viewBox="0 0 9 5"><path d="M0 5L4.5 0L9 5Z" fill="#777"/></svg>
<div style="position:absolute;left:1268px;top:222px;width:11px;height:512px;background:#fdfdfd;border:1px solid #c6c6c6;border-right:none;"></div>
<div style="position:absolute;left:1269px;top:734px;width:10px;height:23px;background:#dcdcdc;"></div>
<div style="position:absolute;left:1268px;top:757px;width:11px;height:14px;background:#fdfdfd;border:1px solid #c6c6c6;border-right:none;"></div>
<svg style="position:absolute;left:1270px;top:763px;" width="9" height="5" viewBox="0 0 9 5"><path d="M0 0L9 0L4.5 5Z" fill="#777"/></svg>
<div style="position:absolute;left:1264px;top:223px;width:1px;height:548px;background:#ababab;"></div>
<div style="position:absolute;left:6px;top:771px;width:1273px;height:28px;background:#e6e6e6;border-top:1px solid #c6c6c6;"></div>
<svg style="position:absolute;left:26.5px;top:781px;" width="5" height="8" viewBox="0 0 5 8"><path d="M5 0V8L0 4Z" fill="#0e5a2f"/></svg>
<svg style="position:absolute;left:55.5px;top:781px;" width="5" height="8" viewBox="0 0 5 8"><path d="M0 0V8L5 4Z" fill="#c4c4c4"/></svg>
<div style="position:absolute;left:81px;top:787px;width:2px;height:2px;background:#0e5a2f;"></div>
<div style="position:absolute;left:85px;top:787px;width:2px;height:2px;background:#0e5a2f;"></div>
<div style="position:absolute;left:90px;top:787px;width:2px;height:2px;background:#0e5a2f;"></div>
<div class="t" style="left:40px;top:771px;font-size:10.5px;color:rgba(255,255,255,0.85);font-weight:bold;transform:scaleX(0.9103);transform-origin:0 0;">vorlage</div>
<div style="position:absolute;left:100px;top:775px;width:1px;height:20px;background:#b0b0b0;"></div>
<div style="position:absolute;left:103px;top:774px;width:69px;height:22px;background:#ffff00;"></div>
<div class="t" style="left:103px;top:779px;font-size:12.2px;color:#000;width:69px;text-align:center;">ESt.Zahl</div>
<div style="position:absolute;left:174px;top:775px;width:1px;height:20px;background:#b0b0b0;"></div>
<div style="position:absolute;left:176px;top:774px;width:123px;height:22px;background:#ffff00;"></div>
<div class="t" style="left:176px;top:779px;font-size:12.2px;color:#000;width:123px;text-align:center;">Sonst.Leist.Entn.</div>
<div style="position:absolute;left:301px;top:775px;width:1px;height:20px;background:#b0b0b0;"></div>
<div style="position:absolute;left:303px;top:774px;width:98px;height:22px;background:#ffff00;"></div>
<div class="t" style="left:303px;top:779px;font-size:12.2px;color:#000;width:98px;text-align:center;">Kfz-Nutzung</div>
<div style="position:absolute;left:402px;top:775px;width:1px;height:20px;background:#b0b0b0;"></div>
<div style="position:absolute;left:405px;top:774px;width:109px;height:22px;background:#ffff00;"></div>
<div class="t" style="left:405px;top:779px;font-size:12.2px;color:#000;width:109px;text-align:center;">Arbeitszimmer</div>
<div style="position:absolute;left:516px;top:775px;width:1px;height:20px;background:#b0b0b0;"></div>
<div style="position:absolute;left:519px;top:774px;width:67px;height:22px;background:#0a6ccc;"></div>
<div class="t" style="left:519px;top:779px;font-size:12.2px;color:#fff;width:67px;text-align:center;">pr.Ausg</div>
<div style="position:absolute;left:588px;top:771px;width:99px;height:25px;background:linear-gradient(#ffffff 40%,#d6efd6);border:1px solid #bdbdbd;border-top:none;border-bottom:none;"></div>
<div style="position:absolute;left:588px;top:794px;width:99px;height:2px;background:#217346;"></div>
<div class="t" style="left:588px;top:779px;font-size:12.2px;color:#217346;font-weight:bold;width:99px;text-align:center;">USt.Voranm</div>
<div style="position:absolute;left:689px;top:774px;width:79px;height:22px;background:#92d050;"></div>
<div class="t" style="left:689px;top:779px;font-size:12.2px;color:#000;width:79px;text-align:center;">USt.Erklär</div>
<div style="position:absolute;left:771px;top:775px;width:1px;height:20px;background:#b0b0b0;"></div>
<div style="position:absolute;left:773px;top:774px;width:49px;height:22px;background:#92d050;"></div>
<div class="t" style="left:773px;top:779px;font-size:12.2px;color:#000;width:49px;text-align:center;">BWA</div>
<div style="position:absolute;left:824px;top:775px;width:1px;height:20px;background:#b0b0b0;"></div>
<div style="position:absolute;left:827px;top:774px;width:42px;height:22px;background:#92d050;"></div>
<div class="t" style="left:827px;top:779px;font-size:12.2px;color:#000;width:42px;text-align:center;">EÜR</div>
<div style="position:absolute;left:871px;top:775px;width:1px;height:20px;background:#b0b0b0;"></div>
<svg style="position:absolute;left:904px;top:777px;" width="18" height="18" viewBox="0 0 18 18"><circle cx="9" cy="9" r="7.8" fill="none" stroke="#777" stroke-width="1.3"/><path d="M9 4.5V13.5M4.5 9H13.5" stroke="#777" stroke-width="1.5"/></svg>
<div style="position:absolute;left:982px;top:779px;width:2px;height:2px;background:#aaa;"></div>
<div style="position:absolute;left:982px;top:784px;width:2px;height:2px;background:#aaa;"></div>
<div style="position:absolute;left:982px;top:789px;width:2px;height:2px;background:#aaa;"></div>
<div style="position:absolute;left:999px;top:778px;width:14px;height:15px;background:#fdfdfd;border:1px solid #c6c6c6;"></div>
<svg style="position:absolute;left:1004px;top:781px;" width="5" height="9" viewBox="0 0 5 9"><path d="M5 0V9L0 4.5Z" fill="#777"/></svg>
<div style="position:absolute;left:1014px;top:778px;width:217px;height:15px;background:#fdfdfd;border:1px solid #c6c6c6;"></div>
<div style="position:absolute;left:1231px;top:779px;width:21px;height:13px;background:#dcdcdc;"></div>
<div style="position:absolute;left:1252px;top:778px;width:15px;height:15px;background:#fdfdfd;border:1px solid #c6c6c6;"></div>
<svg style="position:absolute;left:1258px;top:781px;" width="5" height="9" viewBox="0 0 5 9"><path d="M0 0V9L5 4.5Z" fill="#777"/></svg>
<div style="position:absolute;left:6px;top:799px;width:1273px;height:15px;background:#f3f3f3;border-top:1px solid #d0d0d0;"></div>
<div class="t" style="left:7.1000000000000005px;top:805px;font-size:11.8px;color:#444;transform:scaleX(0.9797);transform-origin:0 0;">Bereit</div>
<div style="position:absolute;left:987px;top:800px;width:37px;height:14px;background:#cfcfcf;"></div>
<svg style="position:absolute;left:997px;top:801px;" width="14" height="13" viewBox="0 0 14 13"><path d="M0.5 0.5H13.5V13M0.5 0.5V13M0.5 4.5H13.5M0.5 8.5H13.5M4.5 0.5V13M9.5 0.5V13" fill="none" stroke="#666"/></svg>
<svg style="position:absolute;left:1036px;top:801px;" width="14" height="13" viewBox="0 0 14 13"><path d="M0.5 13V0.5H13.5V13" fill="none" stroke="#666"/><path d="M3.5 13V3.5H10.5V13M5 6H9M5 8.5H9M5 11H9" fill="none" stroke="#666"/></svg>
<svg style="position:absolute;left:1073px;top:801px;" width="15" height="13" viewBox="0 0 15 13"><path d="M0.5 13V0.5H14.5V13M7.5 0.5V8.5M0.5 8.5H3.5M11.5 8.5H14.5" fill="none" stroke="#666"/></svg>
<div style="position:absolute;left:1104px;top:809px;width:7px;height:2px;background:#555;"></div>
<div style="position:absolute;left:1116px;top:809px;width:99px;height:1px;background:#aaa;"></div>
<div style="position:absolute;left:1163px;top:804px;width:4px;height:11px;background:#555;"></div>
<div style="position:absolute;left:1219px;top:809px;width:8px;height:2px;background:#555;"></div>
<div style="position:absolute;left:1222px;top:806px;width:2px;height:8px;background:#555;"></div>
<div class="t" style="left:1236.4px;top:805px;font-size:11.8px;color:#444;transform:scaleX(0.9026);transform-origin:0 0;">100 %</div>
<div style="position:absolute;left:0px;top:0px;width:1285px;height:6px;background:#ff6600;"></div>
<div style="position:absolute;left:0px;top:814px;width:1285px;height:6px;background:#ff6600;"></div>
<div style="position:absolute;left:0px;top:0px;width:6px;height:820px;background:#ff6600;"></div>
<div style="position:absolute;left:1279px;top:0px;width:6px;height:820px;background:#ff6600;"></div>
</body></html>
